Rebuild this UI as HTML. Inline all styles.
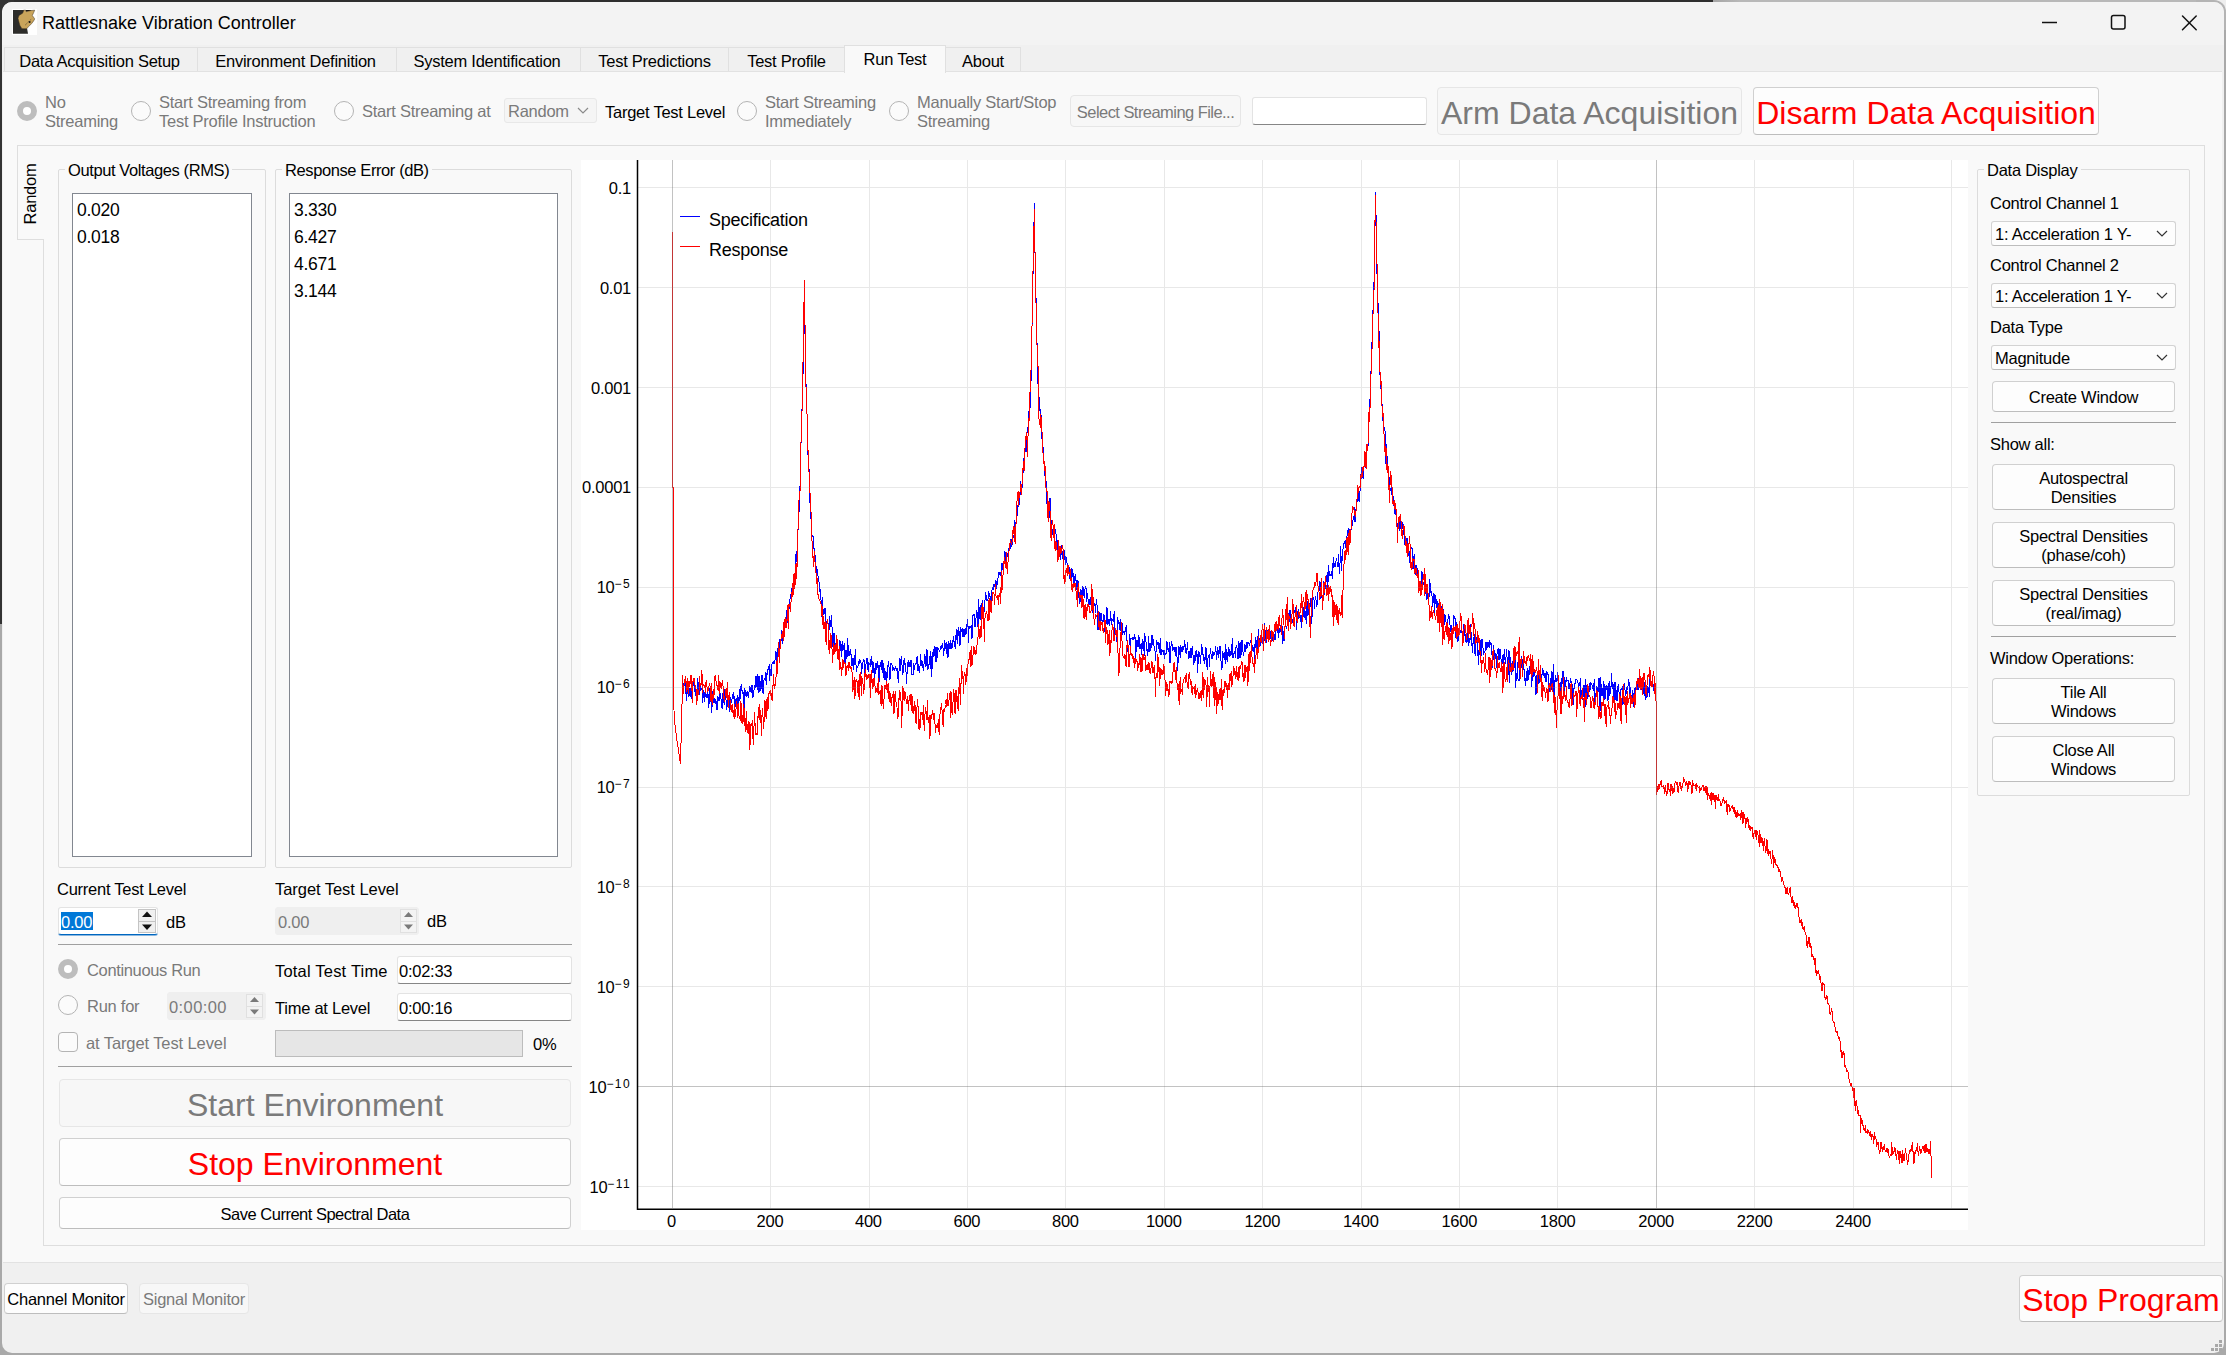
<!DOCTYPE html>
<html><head><meta charset="utf-8"><title>Rattlesnake Vibration Controller</title>
<style>
html,body{margin:0;padding:0;}
body{width:2226px;height:1355px;overflow:hidden;position:relative;background:#a9a9a9;
 font-family:"Liberation Sans",sans-serif;font-size:16.5px;letter-spacing:-0.25px;color:#000;}
.a{position:absolute;box-sizing:border-box;}
.t{position:absolute;white-space:nowrap;line-height:20px;height:20px;margin-left:-1px;}
.g{color:#7a7a7a;}
#win{left:2px;top:2px;width:2222px;height:1351px;background:#f0f0f0;border-radius:10px;overflow:hidden;}
#titlebar{left:0;top:0;width:2222px;height:43px;background:#f3f3f3;}
#title{left:43px;top:11px;font-size:18px;line-height:24px;height:24px;letter-spacing:0;}
#pane{left:3px;top:71px;width:2219px;height:1192px;background:#f9f9f9;border-top:1px solid #e2e2e2;border-bottom:1px solid #e2e2e2;}
.tab{top:47px;height:25px;background:#f0f0f0;border:1px solid #e0e0e0;border-bottom:none;text-align:center;line-height:26px;white-space:nowrap;padding-right:3px;}
.tab.sel{top:45px;height:28px;background:#f9f9f9;line-height:27px;}
.btn{background:#fdfdfd;border:1px solid #d0d0d0;border-bottom-color:#bdbdbd;border-radius:4px;text-align:center;white-space:nowrap;}
.btn.dis{background:#f7f7f7;border-color:#e6e6e6;color:#7a7a7a;}
.big{font-size:32px;line-height:48px;letter-spacing:0;}
.red{color:#ff0000;}
.radio{width:20px;height:20px;border-radius:50%;background:#fbfbfb;border:1px solid #b4b4b4;}
.radio.chk{background:#fff;border:6px solid #bdbdbd;}
.combo{background:#fdfdfd;border:1px solid #d3d3d3;border-bottom-color:#bdbdbd;border-radius:3px;line-height:24px;padding-left:3px;white-space:nowrap;}
.combo.dis{background:#f5f5f5;border-color:#e8e8e8;color:#7a7a7a;}
.edit{background:#fff;border:1px solid #e3e3e3;border-bottom:1px solid #868686;border-radius:3px;line-height:28px;padding-left:1px;white-space:nowrap;}
.grp{border:1px solid #dcdcdc;border-radius:2px;}
.grpt{background:#f9f9f9;padding:0 3px;margin-left:0;}
.list{background:#fff;border:1px solid #828790;}
.hr{height:1px;background:#a0a0a0;}
.spin{background:#fff;border:1px solid #e3e3e3;border-bottom:1px solid #0067c0;border-radius:3px;box-shadow:0 1px 0 rgba(0,103,192,0.45);}
.spin.dis{background:#efefef;border:1px solid #efefef;box-shadow:none;}
.sb{background:#f6f6f6;border:1px solid #d9d9d9;border-radius:2px;}
.two{line-height:19px;padding-top:4px;}
</style></head>
<body>
<div class="a" style="left:1700px;top:0;width:526px;height:3px;background:linear-gradient(90deg,#9c9c9c,#b8b8b8 40px)"></div>
<div class="a" style="left:0;top:0;width:1713px;height:14px;background:#2e2e2e"></div>
<div class="a" style="left:0;top:0;width:14px;height:624px;background:#333"></div>
<div class="a" style="left:2210px;top:0;width:16px;height:16px;background:#eeeeee"></div>
<div class="a" style="left:2196px;top:0;width:30px;height:30px;border-radius:0 12px 0 0;background:#b4b4b4"></div>
<div class="a" id="win"><div class="a" id="titlebar"></div></div>
<!-- title bar -->
<svg class="a" style="left:12px;top:9px" width="25" height="26" viewBox="0 0 25 26">
 <rect x="0" y="0" width="25" height="26" fill="#fff"/>
 <path d="M1 1.1H12L15 19L16 24.7H1Z" fill="#2d2c2a"/>
 <path d="M13.5 1.1H19.5L18.7 2L14.2 2.8Z" fill="#1a1512"/>
 <polygon points="11.5,1.2 13.7,1.2 14.2,2.7 18.7,1.6 22.7,1.2 21.6,3.8 20.3,6.4 22.7,9.9 21.6,12.0 19.5,14.7 16.6,17.6 14.7,19.7 9.9,19.7 7.8,16.2 6.7,12.0 6.0,9.3 7.0,6.4 10.5,4.3 11.3,2.7" fill="#c9a45b" stroke="#3a2f1c" stroke-width="0.5"/>
 <circle cx="17.6" cy="13.1" r="1" fill="#111"/>
 <path d="M13.1 16.2L19.5 9.9" stroke="#3a2f1c" stroke-width="0.6" stroke-dasharray="1 0.7"/>
</svg>
<div class="t" id="title">Rattlesnake Vibration Controller</div>
<svg class="a" style="left:2036px;top:8px" width="170" height="30" viewBox="0 0 170 30" fill="none" stroke="#111" stroke-width="1.5">
 <path d="M6 14.5H21"/>
 <rect x="75.5" y="7.5" width="13.5" height="13.5" rx="2"/>
 <path d="M146.5 8L160.2 21.7M160.2 8L146.5 21.7" stroke-linecap="round"/>
</svg>
<!-- tabs -->
<div class="a tab" style="left:4px;width:194px">Data Acquisition Setup</div>
<div class="a tab" style="left:197px;width:200px">Environment Definition</div>
<div class="a tab" style="left:396px;width:185px">System Identification</div>
<div class="a tab" style="left:580px;width:149px;padding-right:0">Test Predictions</div>
<div class="a tab" style="left:728px;width:117px;padding-right:0">Test Profile</div>
<div class="a tab" style="left:945px;width:76px;padding-right:0">About</div>
<div class="a" id="pane"></div>
<div class="a tab sel" style="left:844px;width:102px;padding-right:0">Run Test</div>
<!-- streaming row -->
<div class="a radio chk" style="left:17px;top:101px"></div>
<div class="t g" style="left:46px;top:92px">No</div><div class="t g" style="left:46px;top:111px">Streaming</div>
<div class="a radio" style="left:131px;top:101px"></div>
<div class="t g" style="left:160px;top:92px">Start Streaming from</div><div class="t g" style="left:160px;top:111px">Test Profile Instruction</div>
<div class="a radio" style="left:334px;top:101px"></div>
<div class="t g" style="left:363px;top:101px">Start Streaming at</div>
<div class="a combo dis" style="left:504px;top:98px;width:93px;height:25px">Random</div>
<svg class="a" style="left:576px;top:106px" width="14" height="10" fill="none" stroke="#8a8a8a" stroke-width="1.2"><path d="M2 2L7 7L12 2"/></svg>
<div class="t" style="left:606px;top:102px">Target Test Level</div>
<div class="a radio" style="left:737px;top:101px"></div>
<div class="t g" style="left:766px;top:92px">Start Streaming</div><div class="t g" style="left:766px;top:111px">Immediately</div>
<div class="a radio" style="left:889px;top:101px"></div>
<div class="t g" style="left:918px;top:92px">Manually Start/Stop</div><div class="t g" style="left:918px;top:111px">Streaming</div>
<div class="a btn dis" style="left:1070px;top:95px;width:171px;height:32px;line-height:32px;letter-spacing:-0.55px">Select Streaming File...</div>
<div class="a edit" style="left:1252px;top:97px;width:175px;height:28px"></div>
<div class="a btn dis big" style="left:1437px;top:87px;width:305px;height:48px;line-height:50px">Arm Data Acquisition</div>
<div class="a btn big red" style="left:1753px;top:87px;width:346px;height:48px;line-height:50px">Disarm Data Acquisition</div>
<!-- inner tab widget -->
<div class="a" style="left:43px;top:145px;width:2162px;height:1101px;border:1px solid #dedede;background:#f9f9f9"></div>
<div class="a" style="left:17px;top:145px;width:27px;height:95px;border:1px solid #dedede;border-right:none;background:#f9f9f9"></div>
<div class="t" style="left:-9px;top:184px;width:80px;text-align:center;transform:rotate(-90deg);transform-origin:50% 50%">Random</div>

<!-- left column -->
<div class="a grp" style="left:58px;top:169px;width:208px;height:699px"></div>
<div class="t grpt" style="left:65px;top:160px;letter-spacing:-0.4px">Output Voltages (RMS)</div>
<div class="a list" style="left:72px;top:193px;width:180px;height:664px"></div>
<div class="t" style="left:78px;top:200px;font-size:17.5px">0.020</div>
<div class="t" style="left:78px;top:227px;font-size:17.5px">0.018</div>
<div class="a grp" style="left:275px;top:169px;width:297px;height:699px"></div>
<div class="t grpt" style="left:282px;top:160px;letter-spacing:-0.4px">Response Error (dB)</div>
<div class="a list" style="left:289px;top:193px;width:269px;height:664px"></div>
<div class="t" style="left:295px;top:200px;font-size:17.5px">3.330</div>
<div class="t" style="left:295px;top:227px;font-size:17.5px">6.427</div>
<div class="t" style="left:295px;top:254px;font-size:17.5px">4.671</div>
<div class="t" style="left:295px;top:281px;font-size:17.5px">3.144</div>

<div class="t" style="left:58px;top:879px">Current Test Level</div>
<div class="a spin" style="left:58px;top:907px;width:100px;height:28px"></div>
<div class="a" style="left:61px;top:912px;width:32px;height:18px;background:#0078d7"></div>
<div class="t" style="left:62px;top:912px;color:#fff">0.00</div>
<div class="a" style="left:138px;top:909px;width:18px;height:24px;background:#f0f0f0;border:1px solid #c4c4c4"></div>
<div class="a" style="left:139px;top:920.5px;width:16px;height:1px;background:#c4c4c4"></div>
<svg class="a" style="left:138px;top:909px" width="18" height="24"><path d="M4 8L9 2.6L14 8Z" fill="#111"/><path d="M4 15.5L9 21L14 15.5Z" fill="#111"/></svg>
<div class="t" style="left:167px;top:912px">dB</div>
<div class="t" style="left:276px;top:879px;letter-spacing:-0.05px">Target Test Level</div>
<div class="a spin dis" style="left:275px;top:907px;width:144px;height:28px"></div>
<div class="t g" style="left:279px;top:912px">0.00</div>
<div class="a" style="left:400px;top:909px;width:17px;height:24px;background:#f3f3f3;border:1px solid #e0e0e0"></div>
<div class="a" style="left:401px;top:920.5px;width:15px;height:1px;background:#e0e0e0"></div>
<svg class="a" style="left:400px;top:909px" width="17" height="24"><path d="M4 8L8.5 3L13 8Z" fill="#7a7a7a"/><path d="M4 15.5L8.5 20.5L13 15.5Z" fill="#7a7a7a"/></svg>
<div class="t" style="left:428px;top:911px">dB</div>
<div class="a hr" style="left:58px;top:944px;width:514px"></div>

<div class="a radio chk" style="left:58px;top:959px"></div>
<div class="t g" style="left:88px;top:960px;letter-spacing:-0.35px">Continuous Run</div>
<div class="t" style="left:276px;top:961px;letter-spacing:0.2px">Total Test Time</div>
<div class="a edit" style="left:397px;top:956px;width:175px;height:28px">0:02:33</div>
<div class="a radio" style="left:58px;top:995px"></div>
<div class="t g" style="left:88px;top:996px">Run for</div>
<div class="a spin dis" style="left:167px;top:992px;width:99px;height:28px"></div>
<div class="t g" style="left:170px;top:997px;letter-spacing:0.4px">0:00:00</div>
<div class="a" style="left:246px;top:994px;width:17px;height:24px;background:#f3f3f3;border:1px solid #e0e0e0"></div>
<div class="a" style="left:247px;top:1005.5px;width:15px;height:1px;background:#e0e0e0"></div>
<svg class="a" style="left:246px;top:994px" width="17" height="24"><path d="M4 8L8.5 3L13 8Z" fill="#7a7a7a"/><path d="M4 15.5L8.5 20.5L13 15.5Z" fill="#7a7a7a"/></svg>
<div class="t" style="left:276px;top:998px">Time at Level</div>
<div class="a edit" style="left:397px;top:993px;width:175px;height:28px">0:00:16</div>
<div class="a" style="left:58px;top:1032px;width:20px;height:20px;border:1px solid #b4b4b4;border-radius:4px;background:#fbfbfb"></div>
<div class="t g" style="left:87px;top:1033px;letter-spacing:-0.1px">at Target Test Level</div>
<div class="a" style="left:275px;top:1030px;width:248px;height:27px;background:#e6e6e6;border:1px solid #bcbcbc"></div>
<div class="t" style="left:534px;top:1034px">0%</div>
<div class="a hr" style="left:58px;top:1066px;width:514px"></div>

<div class="a btn dis big" style="left:59px;top:1079px;width:512px;height:48px;line-height:50px">Start Environment</div>
<div class="a btn big red" style="left:59px;top:1138px;width:512px;height:48px;line-height:50px">Stop Environment</div>
<div class="a btn" style="left:59px;top:1197px;width:512px;height:32px;line-height:32px;letter-spacing:-0.5px">Save Current Spectral Data</div>

<svg class="a" style="left:580px;top:160px" width="1388" height="1070" viewBox="580 160 1388 1070" font-family="Liberation Sans, sans-serif">
<rect x="581" y="160" width="1387" height="1070" fill="#fff"/>
<path d="M682.2 686.0L682.8 688.9L683.4 685.7L684.0 682.7L684.6 686.0L685.2 683.4L685.8 690.5L686.4 700.8L687.0 688.4L687.6 688.3L688.2 696.4L688.8 696.0L689.4 694.8L690.0 688.4L690.6 693.7L691.2 699.1L691.8 685.7L692.4 690.9L693.0 682.3L693.6 685.9L694.2 682.5L694.8 692.0L695.4 685.8L696.0 695.3L696.6 694.4L697.2 692.0L697.8 678.1L698.4 689.8L699.0 693.0L699.6 694.4L700.2 684.7L700.8 691.2L701.4 688.5L702.0 689.8L702.6 702.9L703.2 690.3L703.8 695.2L704.4 702.4L705.0 692.5L705.6 695.5L706.2 697.3L706.8 697.2L707.4 689.7L708.0 697.7L708.6 707.6L709.2 688.3L709.8 704.1L710.4 698.7L711.0 694.1L711.6 713.3L712.2 704.0L712.8 691.3L713.4 699.1L714.0 703.1L714.6 697.7L715.2 704.2L715.8 698.8L716.4 704.4L717.0 710.4L717.6 695.6L718.2 701.3L718.8 697.2L719.4 701.1L720.0 693.2L720.6 697.0L721.2 699.3L721.8 707.3L722.4 709.2L723.0 692.6L723.6 695.8L724.2 705.4L724.8 688.7L725.4 697.7L726.0 699.9L726.6 710.0L727.2 705.7L727.8 698.6L728.4 698.3L729.0 699.0L729.6 712.1L730.2 697.8L730.8 698.3L731.4 702.5L732.0 698.9L732.6 698.2L733.2 692.5L733.8 698.8L734.4 696.0L735.0 707.3L735.6 703.1L736.2 697.8L736.8 702.8L737.4 695.4L738.0 705.2L738.6 696.9L739.2 701.2L739.8 688.8L740.4 698.9L741.0 686.0L741.6 683.6L742.2 693.6L742.8 689.8L743.4 696.1L744.0 711.6L744.6 689.3L745.2 690.2L745.8 695.2L746.4 697.1L747.0 692.0L747.6 691.6L748.2 697.8L748.8 696.1L749.4 685.8L750.0 691.1L750.6 691.6L751.2 684.8L751.8 692.7L752.4 685.3L753.0 697.5L753.6 691.2L754.2 690.0L754.8 685.5L755.4 687.9L756.0 676.4L756.6 681.2L757.2 690.3L757.8 674.5L758.4 693.2L759.0 676.0L759.6 691.8L760.2 680.6L760.8 691.2L761.4 685.8L762.0 674.7L762.6 692.3L763.2 692.8L763.8 680.5L764.4 678.3L765.0 678.0L765.6 672.1L766.2 685.3L766.8 672.7L767.4 674.7L768.0 669.3L768.6 669.3L769.2 664.4L769.8 680.5L770.4 669.0L771.0 676.2L771.6 668.0L772.2 662.7L772.8 663.9L773.4 661.5L774.0 663.8L774.6 660.5L775.2 659.5L775.8 651.4L776.4 653.1L777.0 668.8L777.6 650.6L778.2 646.6L778.8 653.7L779.4 660.2L780.0 639.2L780.6 644.6L781.2 639.6L781.8 630.3L782.4 643.8L783.0 635.6L783.6 633.7L784.2 626.1L784.8 631.5L785.4 622.3L786.0 622.2L786.6 613.1L787.2 609.2L787.8 623.3L788.4 606.9L789.0 608.8L789.6 603.1L790.2 597.4L790.8 593.7L791.4 598.1L792.0 588.2L792.6 585.7L793.2 583.4L793.8 588.8L794.4 580.2L795.0 572.8L795.6 561.4L796.2 551.4L796.8 561.6L797.4 553.4L798.0 530.4L798.6 520.5L799.2 507.5L799.8 493.0L800.4 473.1L801.0 442.9L801.6 436.5L802.2 397.0L802.8 387.9L803.4 349.4L804.0 309.9L804.3 292.0L804.6 321.1L805.2 338.8L805.8 371.3L806.4 408.6L807.0 414.4L807.6 438.4L808.2 463.0L808.8 464.9L809.4 477.8L810.0 503.1L810.6 512.3L811.2 521.3L811.8 533.9L812.4 536.0L813.0 536.4L813.6 548.6L814.2 548.1L814.8 548.3L815.4 566.1L816.0 566.2L816.6 573.9L817.2 569.1L817.8 575.3L818.4 577.5L819.0 582.2L819.6 591.9L820.2 588.6L820.8 598.9L821.4 601.7L822.0 617.4L822.6 596.6L823.2 614.5L823.8 610.2L824.4 613.5L825.0 607.9L825.6 615.6L826.2 625.5L826.8 621.0L827.4 623.7L828.0 622.9L828.6 635.0L829.2 627.7L829.8 616.3L830.4 626.9L831.0 620.9L831.6 614.8L832.2 632.6L832.8 647.4L833.4 639.2L834.0 633.5L834.6 635.8L835.2 650.5L835.8 643.7L836.4 643.5L837.0 643.4L837.6 644.6L838.2 651.0L838.8 649.6L839.4 647.6L840.0 640.4L840.6 651.0L841.2 643.7L841.8 656.6L842.4 641.3L843.0 648.6L843.6 650.0L844.2 642.7L844.8 664.2L845.4 662.8L846.0 649.6L846.6 658.8L847.2 656.2L847.8 638.3L848.4 656.1L849.0 654.3L849.6 655.7L850.2 649.1L850.8 654.3L851.4 655.3L852.0 665.8L852.6 659.8L853.2 657.6L853.8 669.7L854.4 655.2L855.0 656.6L855.6 648.6L856.2 671.7L856.8 667.5L857.4 667.6L858.0 666.1L858.6 662.1L859.2 663.2L859.8 660.3L860.4 660.8L861.0 662.7L861.6 674.0L862.2 667.0L862.8 662.6L863.4 659.8L864.0 659.7L864.6 675.9L865.2 667.8L865.8 664.7L866.4 662.4L867.0 658.1L867.6 664.5L868.2 671.8L868.8 663.1L869.4 664.2L870.0 664.4L870.6 666.6L871.2 656.5L871.8 664.6L872.4 661.1L873.0 673.0L873.6 661.8L874.2 670.9L874.8 678.2L875.4 664.9L876.0 663.3L876.6 668.4L877.2 667.1L877.8 661.3L878.4 670.8L879.0 682.7L879.6 666.0L880.2 666.5L880.8 661.6L881.4 670.3L882.0 660.6L882.6 661.6L883.2 678.0L883.8 663.0L884.4 676.7L885.0 680.2L885.6 670.7L886.2 673.0L886.8 683.8L887.4 667.8L888.0 665.4L888.6 660.9L889.2 669.2L889.8 680.0L890.4 676.1L891.0 663.2L891.6 663.6L892.2 665.7L892.8 670.9L893.4 667.4L894.0 670.2L894.6 670.8L895.2 666.7L895.8 668.2L896.4 670.0L897.0 667.9L897.6 672.2L898.2 682.5L898.8 672.7L899.4 668.6L900.0 658.2L900.6 671.1L901.2 656.5L901.8 659.7L902.4 674.5L903.0 673.3L903.6 667.0L904.2 657.6L904.8 665.4L905.4 663.5L906.0 672.2L906.6 684.4L907.2 668.8L907.8 662.5L908.4 660.0L909.0 666.5L909.6 665.7L910.2 659.8L910.8 667.4L911.4 659.6L912.0 674.8L912.6 674.3L913.2 674.3L913.8 663.2L914.4 669.8L915.0 665.0L915.6 663.3L916.2 663.5L916.8 657.7L917.4 656.7L918.0 671.2L918.6 664.0L919.2 666.6L919.8 672.5L920.4 654.5L921.0 659.9L921.6 665.5L922.2 666.7L922.8 661.1L923.4 670.7L924.0 664.1L924.6 654.9L925.2 656.1L925.8 667.4L926.4 664.4L927.0 649.2L927.6 670.3L928.2 664.2L928.8 669.4L929.4 656.5L930.0 656.6L930.6 651.3L931.2 676.8L931.8 656.1L932.4 668.8L933.0 652.5L933.6 657.2L934.2 645.7L934.8 653.0L935.4 662.3L936.0 647.1L936.6 662.3L937.2 656.3L937.8 647.2L938.4 650.0L939.0 649.9L939.6 652.0L940.2 648.7L940.8 646.6L941.4 649.3L942.0 644.7L942.6 642.7L943.2 649.7L943.8 656.3L944.4 640.1L945.0 648.8L945.6 644.4L946.2 642.1L946.8 653.9L947.4 643.9L948.0 658.0L948.6 641.5L949.2 648.7L949.8 644.0L950.4 640.4L951.0 648.9L951.6 643.1L952.2 648.2L952.8 642.9L953.4 636.3L954.0 641.7L954.6 642.3L955.2 648.6L955.8 635.5L956.4 640.1L957.0 629.5L957.6 644.2L958.2 632.3L958.8 627.4L959.4 637.3L960.0 645.5L960.6 627.5L961.2 629.6L961.8 631.1L962.4 628.2L963.0 637.3L963.6 629.1L964.2 629.1L964.8 637.2L965.4 627.8L966.0 634.9L966.6 625.2L967.2 623.0L967.8 618.6L968.4 642.9L969.0 626.1L969.6 629.2L970.2 626.4L970.8 627.1L971.4 625.6L972.0 638.9L972.6 617.6L973.2 613.8L973.8 616.3L974.4 613.7L975.0 626.5L975.6 626.4L976.2 613.7L976.8 610.5L977.4 615.6L978.0 627.3L978.6 598.9L979.2 618.6L979.8 607.2L980.4 620.4L981.0 605.1L981.6 608.8L982.2 600.5L982.8 602.6L983.4 617.9L984.0 612.5L984.6 602.9L985.2 599.0L985.8 591.9L986.4 599.8L987.0 600.9L987.6 599.5L988.2 598.4L988.8 591.2L989.4 596.4L990.0 595.5L990.6 604.4L991.2 607.7L991.8 591.7L992.4 586.9L993.0 590.0L993.6 585.7L994.2 583.8L994.8 586.8L995.4 579.7L996.0 589.2L996.6 582.6L997.2 583.8L997.8 579.5L998.4 574.9L999.0 572.3L999.6 575.1L1000.2 572.0L1000.8 575.7L1001.4 572.5L1002.0 563.1L1002.6 570.4L1003.2 560.6L1003.8 563.6L1004.4 563.8L1005.0 551.5L1005.6 562.8L1006.2 561.5L1006.8 557.7L1007.4 554.4L1008.0 552.9L1008.6 547.6L1009.2 550.1L1009.8 546.7L1010.4 548.9L1011.0 539.3L1011.6 546.5L1012.2 544.1L1012.8 540.4L1013.4 535.1L1014.0 537.9L1014.6 519.8L1015.2 529.2L1015.8 523.6L1016.4 519.9L1017.0 516.7L1017.6 506.0L1018.2 504.3L1018.8 506.7L1019.4 501.2L1020.0 495.5L1020.6 481.0L1021.2 489.9L1021.8 490.1L1022.4 484.3L1023.0 473.8L1023.6 458.2L1024.2 470.0L1024.8 457.4L1025.4 438.7L1026.0 452.0L1026.6 435.7L1027.2 432.3L1027.8 427.2L1028.4 431.7L1029.0 410.8L1029.6 406.1L1030.2 408.4L1030.8 395.2L1031.4 355.2L1032.0 327.1L1032.6 293.7L1033.2 265.3L1033.8 236.2L1034.3 202.6L1034.4 208.7L1035.0 252.7L1035.6 276.9L1036.2 306.5L1036.8 335.5L1037.4 357.4L1038.0 384.2L1038.6 394.6L1039.2 397.9L1039.8 410.5L1040.4 409.9L1041.0 414.1L1041.6 436.3L1042.2 439.7L1042.8 450.9L1043.4 447.0L1044.0 463.5L1044.6 470.6L1045.2 477.6L1045.8 475.6L1046.4 491.1L1047.0 504.0L1047.6 504.2L1048.2 501.8L1048.8 509.4L1049.4 517.9L1050.0 497.8L1050.6 515.5L1051.2 522.4L1051.8 525.5L1052.4 535.2L1053.0 533.0L1053.6 528.8L1054.2 530.7L1054.8 536.4L1055.4 529.3L1056.0 534.3L1056.6 543.4L1057.2 553.4L1057.8 539.7L1058.4 542.1L1059.0 545.6L1059.6 556.0L1060.2 547.3L1060.8 560.3L1061.4 545.1L1062.0 551.4L1062.6 553.0L1063.2 561.8L1063.8 565.5L1064.4 550.3L1065.0 555.5L1065.6 565.1L1066.2 560.3L1066.8 556.9L1067.4 575.0L1068.0 571.9L1068.6 572.8L1069.2 567.2L1069.8 578.8L1070.4 570.6L1071.0 581.3L1071.6 568.5L1072.2 569.8L1072.8 577.4L1073.4 572.7L1074.0 583.0L1074.6 580.8L1075.2 574.3L1075.8 581.3L1076.4 579.6L1077.0 589.6L1077.6 579.8L1078.2 581.9L1078.8 594.7L1079.4 603.5L1080.0 602.6L1080.6 588.8L1081.2 591.0L1081.8 601.9L1082.4 590.5L1083.0 586.4L1083.6 594.0L1084.2 597.5L1084.8 590.1L1085.4 586.0L1086.0 588.0L1086.6 602.3L1087.2 593.5L1087.8 597.8L1088.4 601.0L1089.0 604.8L1089.6 598.9L1090.2 605.3L1090.8 597.0L1091.4 600.9L1092.0 597.6L1092.6 613.0L1093.2 605.0L1093.8 601.5L1094.4 604.5L1095.0 606.0L1095.6 613.4L1096.2 599.3L1096.8 603.3L1097.4 608.0L1098.0 630.1L1098.6 618.9L1099.2 611.7L1099.8 618.5L1100.4 629.4L1101.0 613.1L1101.6 613.1L1102.2 625.2L1102.8 620.4L1103.4 622.2L1104.0 614.4L1104.6 632.4L1105.2 631.2L1105.8 622.8L1106.4 624.1L1107.0 607.2L1107.6 624.5L1108.2 618.8L1108.8 623.6L1109.4 625.9L1110.0 619.0L1110.6 611.4L1111.2 624.6L1111.8 617.7L1112.4 620.7L1113.0 619.7L1113.6 621.9L1114.2 610.8L1114.8 634.3L1115.4 627.6L1116.0 634.7L1116.6 641.9L1117.2 627.7L1117.8 617.4L1118.4 623.4L1119.0 622.1L1119.6 626.9L1120.2 631.1L1120.8 619.2L1121.4 634.2L1122.0 623.1L1122.6 634.8L1123.2 632.4L1123.8 631.7L1124.4 633.6L1125.0 631.3L1125.6 631.4L1126.2 625.5L1126.8 635.8L1127.4 650.5L1128.0 652.0L1128.6 647.5L1129.2 643.3L1129.8 634.4L1130.4 649.6L1131.0 638.5L1131.6 638.7L1132.2 637.6L1132.8 640.3L1133.4 637.3L1134.0 639.6L1134.6 633.9L1135.2 638.3L1135.8 658.1L1136.4 640.6L1137.0 639.9L1137.6 645.6L1138.2 647.1L1138.8 635.4L1139.4 641.0L1140.0 649.4L1140.6 644.8L1141.2 643.9L1141.8 655.0L1142.4 639.4L1143.0 644.3L1143.6 640.8L1144.2 655.5L1144.8 632.8L1145.4 640.7L1146.0 641.7L1146.6 650.2L1147.2 650.0L1147.8 656.2L1148.4 636.5L1149.0 651.8L1149.6 644.6L1150.2 642.6L1150.8 650.9L1151.4 641.5L1152.0 634.9L1152.6 645.3L1153.2 638.8L1153.8 644.1L1154.4 651.0L1155.0 650.8L1155.6 660.7L1156.2 647.7L1156.8 640.0L1157.4 644.7L1158.0 643.8L1158.6 642.0L1159.2 652.6L1159.8 645.6L1160.4 637.7L1161.0 654.8L1161.6 648.9L1162.2 652.3L1162.8 650.5L1163.4 654.6L1164.0 650.1L1164.6 659.3L1165.2 653.2L1165.8 653.0L1166.4 653.2L1167.0 641.5L1167.6 649.3L1168.2 648.8L1168.8 652.0L1169.4 642.5L1170.0 663.0L1170.6 651.5L1171.2 643.6L1171.8 640.7L1172.4 649.3L1173.0 650.5L1173.6 646.9L1174.2 652.0L1174.8 647.5L1175.4 655.6L1176.0 647.2L1176.6 651.4L1177.2 659.1L1177.8 671.3L1178.4 645.9L1179.0 649.2L1179.6 647.1L1180.2 658.1L1180.8 645.4L1181.4 649.5L1182.0 652.3L1182.6 646.7L1183.2 646.9L1183.8 649.9L1184.4 640.3L1185.0 644.2L1185.6 650.4L1186.2 654.1L1186.8 651.9L1187.4 642.5L1188.0 650.4L1188.6 659.2L1189.2 657.5L1189.8 652.8L1190.4 648.1L1191.0 658.2L1191.6 650.0L1192.2 646.6L1192.8 648.8L1193.4 664.7L1194.0 655.4L1194.6 662.6L1195.2 651.0L1195.8 661.0L1196.4 650.4L1197.0 653.1L1197.6 673.0L1198.2 660.0L1198.8 651.2L1199.4 653.8L1200.0 656.8L1200.6 663.6L1201.2 651.5L1201.8 644.1L1202.4 652.8L1203.0 654.5L1203.6 655.1L1204.2 664.2L1204.8 656.6L1205.4 660.3L1206.0 647.5L1206.6 660.6L1207.2 669.9L1207.8 659.8L1208.4 655.8L1209.0 654.9L1209.6 667.3L1210.2 648.1L1210.8 652.9L1211.4 657.0L1212.0 659.1L1212.6 650.8L1213.2 655.7L1213.8 651.6L1214.4 654.1L1215.0 652.4L1215.6 646.3L1216.2 652.9L1216.8 659.6L1217.4 647.2L1218.0 651.4L1218.6 657.9L1219.2 646.4L1219.8 654.1L1220.4 646.3L1221.0 661.1L1221.6 670.0L1222.2 667.7L1222.8 650.9L1223.4 657.8L1224.0 653.0L1224.6 652.7L1225.2 663.6L1225.8 643.9L1226.4 659.7L1227.0 651.3L1227.6 662.2L1228.2 652.8L1228.8 647.3L1229.4 653.3L1230.0 656.7L1230.6 651.3L1231.2 654.7L1231.8 647.8L1232.4 638.1L1233.0 657.5L1233.6 655.9L1234.2 651.6L1234.8 651.0L1235.4 658.2L1236.0 647.5L1236.6 646.0L1237.2 649.0L1237.8 659.0L1238.4 641.4L1239.0 658.5L1239.6 645.4L1240.2 642.3L1240.8 658.2L1241.4 647.8L1242.0 640.4L1242.6 645.7L1243.2 654.6L1243.8 656.3L1244.4 644.5L1245.0 649.8L1245.6 651.9L1246.2 642.4L1246.8 648.6L1247.4 645.5L1248.0 642.2L1248.6 642.2L1249.2 645.4L1249.8 644.8L1250.4 641.0L1251.0 641.5L1251.6 652.2L1252.2 645.1L1252.8 650.0L1253.4 652.1L1254.0 647.2L1254.6 659.7L1255.2 637.3L1255.8 648.0L1256.4 639.6L1257.0 655.2L1257.6 653.7L1258.2 628.8L1258.8 634.3L1259.4 644.8L1260.0 645.4L1260.6 644.6L1261.2 638.2L1261.8 641.7L1262.4 642.9L1263.0 637.1L1263.6 645.0L1264.2 623.4L1264.8 641.3L1265.4 630.1L1266.0 643.3L1266.6 634.4L1267.2 630.3L1267.8 638.2L1268.4 629.7L1269.0 629.4L1269.6 625.3L1270.2 634.2L1270.8 637.9L1271.4 641.6L1272.0 632.8L1272.6 641.4L1273.2 633.3L1273.8 632.3L1274.4 637.0L1275.0 640.3L1275.6 630.0L1276.2 630.3L1276.8 630.4L1277.4 631.7L1278.0 625.5L1278.6 638.3L1279.2 627.8L1279.8 633.4L1280.4 624.7L1281.0 632.0L1281.6 632.0L1282.2 626.2L1282.8 643.7L1283.4 630.8L1284.0 641.0L1284.6 634.4L1285.2 622.7L1285.8 624.0L1286.4 629.2L1287.0 625.9L1287.6 625.4L1288.2 622.9L1288.8 613.4L1289.4 622.4L1290.0 610.1L1290.6 625.7L1291.2 618.2L1291.8 617.8L1292.4 620.3L1293.0 623.1L1293.6 612.1L1294.2 609.7L1294.8 613.3L1295.4 607.0L1296.0 612.9L1296.6 630.3L1297.2 611.4L1297.8 622.2L1298.4 608.6L1299.0 618.6L1299.6 613.9L1300.2 615.0L1300.8 619.2L1301.4 627.7L1302.0 615.3L1302.6 614.3L1303.2 607.1L1303.8 616.8L1304.4 610.5L1305.0 617.8L1305.6 610.7L1306.2 623.7L1306.8 598.2L1307.4 607.7L1308.0 615.7L1308.6 606.4L1309.2 603.3L1309.8 605.9L1310.4 598.5L1311.0 606.9L1311.6 623.8L1312.2 613.3L1312.8 597.3L1313.4 597.9L1314.0 600.0L1314.6 609.3L1315.2 596.1L1315.8 596.1L1316.4 606.2L1317.0 605.4L1317.6 595.9L1318.2 590.7L1318.8 587.3L1319.4 591.2L1320.0 581.1L1320.6 598.9L1321.2 588.4L1321.8 594.7L1322.4 604.2L1323.0 597.9L1323.6 581.0L1324.2 593.4L1324.8 594.5L1325.4 580.2L1326.0 577.9L1326.6 581.9L1327.2 571.9L1327.8 591.5L1328.4 564.8L1329.0 571.3L1329.6 575.1L1330.2 574.2L1330.8 575.6L1331.4 575.2L1332.0 570.6L1332.6 579.3L1333.2 556.8L1333.8 568.3L1334.4 562.9L1335.0 566.9L1335.6 566.4L1336.2 558.1L1336.8 558.4L1337.4 566.9L1338.0 562.2L1338.6 554.2L1339.2 572.4L1339.8 573.2L1340.4 545.6L1341.0 555.3L1341.6 570.7L1342.2 556.3L1342.8 550.7L1343.4 546.5L1344.0 543.2L1344.6 543.8L1345.2 540.5L1345.8 547.9L1346.4 538.0L1347.0 536.0L1347.6 529.7L1348.2 534.7L1348.8 527.9L1349.4 530.4L1350.0 537.6L1350.6 530.6L1351.2 529.9L1351.8 527.0L1352.4 522.9L1353.0 519.7L1353.6 516.4L1354.2 521.8L1354.8 507.3L1355.4 521.7L1356.0 509.5L1356.6 502.6L1357.2 501.9L1357.8 498.5L1358.4 500.9L1359.0 492.4L1359.6 502.2L1360.2 485.8L1360.8 473.8L1361.4 479.2L1362.0 467.5L1362.6 475.1L1363.2 479.2L1363.8 472.0L1364.4 455.0L1365.0 454.3L1365.6 468.2L1366.2 453.0L1366.8 446.5L1367.4 445.1L1368.0 446.3L1368.6 428.1L1369.2 409.9L1369.8 402.1L1370.4 394.6L1371.0 371.1L1371.6 350.3L1372.2 338.9L1372.8 314.8L1373.4 301.9L1374.0 282.3L1374.6 265.8L1375.2 209.3L1375.6 192.0L1375.8 202.6L1376.4 237.6L1377.0 274.0L1377.6 290.7L1378.2 308.0L1378.8 322.4L1379.4 346.0L1380.0 374.8L1380.6 388.3L1381.2 389.1L1381.8 400.1L1382.4 409.7L1383.0 420.5L1383.6 420.3L1384.2 429.5L1384.8 427.3L1385.4 438.5L1386.0 463.8L1386.6 444.4L1387.2 461.4L1387.8 471.0L1388.4 473.1L1389.0 476.5L1389.6 486.3L1390.2 489.0L1390.8 490.8L1391.4 482.5L1392.0 495.0L1392.6 493.1L1393.2 497.3L1393.8 504.6L1394.4 509.9L1395.0 514.1L1395.6 506.5L1396.2 518.7L1396.8 522.8L1397.4 524.7L1398.0 528.8L1398.6 519.6L1399.2 521.6L1399.8 530.7L1400.4 517.9L1401.0 529.1L1401.6 525.9L1402.2 528.5L1402.8 521.9L1403.4 528.5L1404.0 535.2L1404.6 543.6L1405.2 545.9L1405.8 539.5L1406.4 540.4L1407.0 538.1L1407.6 547.7L1408.2 544.7L1408.8 552.4L1409.4 562.7L1410.0 550.9L1410.6 543.8L1411.2 549.3L1411.8 547.4L1412.4 550.5L1413.0 569.2L1413.6 562.7L1414.2 553.6L1414.8 569.2L1415.4 575.4L1416.0 565.4L1416.6 565.1L1417.2 568.8L1417.8 574.6L1418.4 578.6L1419.0 583.9L1419.6 585.2L1420.2 586.2L1420.8 588.6L1421.4 584.4L1422.0 571.5L1422.6 580.9L1423.2 585.2L1423.8 581.7L1424.4 592.0L1425.0 584.1L1425.6 581.9L1426.2 599.5L1426.8 594.7L1427.4 592.2L1428.0 598.5L1428.6 600.4L1429.2 595.8L1429.8 579.4L1430.4 590.9L1431.0 593.1L1431.6 590.8L1432.2 599.0L1432.8 607.4L1433.4 596.4L1434.0 593.4L1434.6 616.4L1435.2 599.2L1435.8 595.4L1436.4 605.4L1437.0 607.6L1437.6 601.0L1438.2 612.1L1438.8 604.0L1439.4 602.2L1440.0 609.9L1440.6 615.2L1441.2 606.5L1441.8 613.6L1442.4 611.3L1443.0 634.2L1443.6 609.3L1444.2 624.9L1444.8 614.9L1445.4 615.1L1446.0 622.0L1446.6 623.9L1447.2 627.3L1447.8 620.8L1448.4 615.3L1449.0 616.3L1449.6 624.0L1450.2 625.1L1450.8 631.9L1451.4 625.1L1452.0 630.5L1452.6 634.6L1453.2 625.0L1453.8 615.5L1454.4 617.9L1455.0 616.9L1455.6 638.2L1456.2 621.6L1456.8 636.6L1457.4 632.3L1458.0 641.5L1458.6 636.7L1459.2 629.0L1459.8 629.0L1460.4 631.5L1461.0 632.8L1461.6 628.9L1462.2 632.4L1462.8 645.4L1463.4 623.6L1464.0 636.2L1464.6 629.3L1465.2 636.6L1465.8 642.0L1466.4 635.8L1467.0 642.5L1467.6 627.7L1468.2 646.0L1468.8 634.5L1469.4 643.3L1470.0 640.4L1470.6 624.2L1471.2 635.5L1471.8 642.2L1472.4 652.7L1473.0 643.4L1473.6 643.6L1474.2 633.6L1474.8 653.2L1475.4 656.4L1476.0 643.3L1476.6 642.1L1477.2 634.2L1477.8 650.8L1478.4 665.0L1479.0 650.3L1479.6 654.8L1480.2 649.7L1480.8 640.1L1481.4 656.4L1482.0 639.3L1482.6 645.8L1483.2 649.5L1483.8 654.5L1484.4 651.3L1485.0 651.4L1485.6 644.3L1486.2 641.6L1486.8 650.0L1487.4 645.7L1488.0 642.5L1488.6 643.2L1489.2 648.1L1489.8 640.4L1490.4 643.8L1491.0 642.4L1491.6 653.9L1492.2 655.9L1492.8 668.4L1493.4 644.7L1494.0 649.9L1494.6 661.2L1495.2 653.4L1495.8 653.1L1496.4 668.3L1497.0 653.7L1497.6 649.2L1498.2 648.6L1498.8 659.3L1499.4 659.5L1500.0 649.4L1500.6 652.0L1501.2 662.3L1501.8 663.0L1502.4 655.1L1503.0 664.0L1503.6 664.0L1504.2 649.4L1504.8 658.5L1505.4 663.9L1506.0 657.7L1506.6 648.8L1507.2 660.2L1507.8 667.9L1508.4 674.6L1509.0 649.9L1509.6 683.1L1510.2 656.9L1510.8 671.3L1511.4 673.7L1512.0 672.2L1512.6 666.2L1513.2 658.5L1513.8 670.6L1514.4 661.9L1515.0 651.5L1515.6 688.4L1516.2 672.6L1516.8 681.4L1517.4 662.4L1518.0 679.2L1518.6 680.4L1519.2 680.4L1519.8 668.7L1520.4 661.9L1521.0 668.2L1521.6 656.4L1522.2 659.7L1522.8 670.7L1523.4 664.4L1524.0 669.5L1524.6 670.1L1525.2 685.6L1525.8 681.0L1526.4 671.3L1527.0 681.1L1527.6 667.6L1528.2 670.6L1528.8 679.9L1529.4 666.0L1530.0 672.1L1530.6 666.2L1531.2 675.3L1531.8 687.2L1532.4 670.7L1533.0 677.2L1533.6 670.5L1534.2 669.4L1534.8 669.3L1535.4 687.8L1536.0 694.8L1536.6 680.6L1537.2 672.8L1537.8 682.6L1538.4 675.3L1539.0 683.5L1539.6 679.8L1540.2 679.8L1540.8 682.4L1541.4 674.5L1542.0 675.6L1542.6 667.9L1543.2 675.7L1543.8 670.0L1544.4 677.7L1545.0 673.0L1545.6 679.5L1546.2 682.3L1546.8 670.6L1547.4 674.3L1548.0 673.6L1548.6 685.0L1549.2 692.4L1549.8 686.1L1550.4 677.7L1551.0 691.0L1551.6 671.0L1552.2 691.5L1552.8 676.3L1553.4 663.8L1554.0 700.6L1554.6 692.6L1555.2 674.6L1555.8 682.1L1556.4 679.7L1557.0 681.8L1557.6 672.4L1558.2 677.3L1558.8 685.0L1559.4 683.2L1560.0 690.8L1560.6 682.4L1561.2 699.7L1561.8 677.8L1562.4 684.1L1563.0 670.9L1563.6 674.9L1564.2 692.6L1564.8 677.0L1565.4 686.8L1566.0 682.5L1566.6 676.8L1567.2 681.0L1567.8 680.2L1568.4 680.4L1569.0 689.2L1569.6 688.5L1570.2 680.3L1570.8 678.4L1571.4 686.1L1572.0 683.5L1572.6 692.0L1573.2 704.5L1573.8 690.8L1574.4 684.3L1575.0 683.6L1575.6 679.7L1576.2 679.5L1576.8 679.1L1577.4 682.8L1578.0 682.7L1578.6 691.0L1579.2 683.1L1579.8 684.4L1580.4 678.5L1581.0 698.3L1581.6 689.7L1582.2 699.5L1582.8 692.1L1583.4 697.4L1584.0 684.7L1584.6 691.8L1585.2 706.9L1585.8 679.2L1586.4 695.5L1587.0 699.5L1587.6 689.9L1588.2 692.6L1588.8 696.6L1589.4 683.0L1590.0 690.3L1590.6 681.9L1591.2 683.2L1591.8 683.6L1592.4 686.6L1593.0 688.7L1593.6 691.1L1594.2 679.1L1594.8 703.2L1595.4 696.9L1596.0 693.6L1596.6 685.9L1597.2 687.6L1597.8 692.5L1598.4 691.4L1599.0 678.0L1599.6 694.1L1600.2 711.0L1600.8 677.1L1601.4 696.1L1602.0 691.3L1602.6 687.8L1603.2 699.2L1603.8 681.3L1604.4 689.8L1605.0 700.0L1605.6 687.4L1606.2 686.1L1606.8 689.6L1607.4 686.0L1608.0 700.8L1608.6 683.2L1609.2 695.6L1609.8 681.2L1610.4 694.1L1611.0 688.2L1611.6 673.1L1612.2 688.9L1612.8 682.4L1613.4 686.3L1614.0 701.0L1614.6 682.2L1615.2 682.6L1615.8 700.3L1616.4 690.0L1617.0 701.2L1617.6 691.7L1618.2 683.8L1618.8 688.9L1619.4 698.9L1620.0 696.7L1620.6 689.4L1621.2 689.8L1621.8 688.7L1622.4 685.9L1623.0 704.5L1623.6 689.6L1624.2 682.6L1624.8 686.6L1625.4 695.3L1626.0 694.6L1626.6 688.8L1627.2 685.6L1627.8 689.9L1628.4 679.5L1629.0 681.8L1629.6 696.0L1630.2 686.9L1630.8 692.8L1631.4 699.4L1632.0 695.0L1632.6 690.1L1633.2 706.6L1633.8 695.2L1634.4 687.8L1635.0 695.6L1635.6 693.1L1636.2 684.6L1636.8 690.4L1637.4 688.8L1638.0 677.8L1638.6 688.7L1639.2 688.0L1639.8 687.0L1640.4 679.6L1641.0 687.5L1641.6 689.4L1642.2 690.4L1642.8 682.6L1643.4 694.4L1644.0 682.1L1644.6 688.1L1645.2 699.6L1645.8 685.2L1646.4 686.2L1647.0 697.7L1647.6 687.0L1648.2 687.5L1648.8 691.0L1649.4 697.4L1650.0 675.7L1650.6 684.1L1651.2 683.0L1651.8 682.5L1652.4 683.9L1653.0 684.0L1653.6 691.4L1654.2 683.6L1654.8 690.0L1655.4 692.1L1656.0 684.6" stroke="#0000ff" stroke-width="1" fill="none" shape-rendering="crispEdges"/>
<path d="M672.5 232.0L672.5 487.0L673.5 487.0L673.5 700.0L674.5 720.0L676.5 737.7L678.5 750.0L680.4 763.5L681.5 726.0L682.7 675.0L682.7 676.4L683.3 694.4L683.9 686.0L684.5 678.7L685.1 683.4L685.7 676.5L686.3 685.1L686.9 692.3L687.5 678.2L688.1 681.5L688.7 694.3L689.3 680.8L689.9 685.4L690.5 675.5L691.1 675.7L691.7 677.7L692.3 703.2L692.9 682.0L693.5 679.6L694.1 678.4L694.7 680.9L695.3 688.8L695.9 685.5L696.5 704.5L697.1 689.4L697.7 700.7L698.3 690.7L698.9 693.2L699.5 675.7L700.1 683.9L700.7 685.1L701.3 684.4L701.9 669.8L702.5 692.7L703.1 684.6L703.7 684.3L704.3 686.0L704.9 686.7L705.5 692.9L706.1 680.3L706.7 681.8L707.3 691.4L707.9 691.7L708.5 687.8L709.1 685.8L709.7 683.3L710.3 688.7L710.9 701.3L711.5 683.3L712.1 704.7L712.7 700.7L713.3 688.6L713.9 698.5L714.5 679.9L715.1 675.4L715.7 677.3L716.3 683.9L716.9 685.9L717.5 685.4L718.1 690.8L718.7 674.6L719.3 693.5L719.9 680.8L720.5 685.9L721.1 688.5L721.7 683.6L722.3 681.7L722.9 684.4L723.5 692.8L724.1 700.2L724.7 702.2L725.3 689.9L725.9 690.2L726.5 689.0L727.1 700.0L727.7 681.9L728.3 707.5L728.9 695.2L729.5 692.5L730.1 701.3L730.7 709.9L731.3 705.0L731.9 712.2L732.5 704.4L733.1 714.7L733.7 716.4L734.3 704.0L734.9 719.0L735.5 709.4L736.1 708.8L736.7 701.3L737.3 706.2L737.9 717.6L738.5 702.6L739.1 718.4L739.7 718.5L740.3 719.4L740.9 700.6L741.5 715.2L742.1 724.4L742.7 715.0L743.3 721.8L743.9 703.7L744.5 726.0L745.1 717.9L745.7 731.6L746.3 711.1L746.9 730.0L747.5 724.2L748.1 734.4L748.7 721.0L749.3 722.5L749.9 749.6L750.5 725.0L751.1 724.5L751.7 726.3L752.3 719.7L752.9 737.4L753.5 744.8L754.1 722.8L754.7 711.9L755.3 733.4L755.9 734.9L756.5 732.7L757.1 735.3L757.7 715.9L758.3 718.1L758.9 707.3L759.5 704.3L760.1 722.5L760.7 709.7L761.3 735.6L761.9 716.6L762.5 708.1L763.1 718.5L763.7 728.7L764.3 716.7L764.9 699.7L765.5 709.2L766.1 719.0L766.7 701.8L767.3 697.0L767.9 710.7L768.5 702.9L769.1 691.3L769.7 694.1L770.3 690.1L770.9 695.7L771.5 692.8L772.1 701.2L772.7 696.3L773.3 674.4L773.9 685.2L774.5 689.1L775.1 683.4L775.7 686.2L776.3 669.1L776.9 661.4L777.5 673.6L778.1 655.0L778.7 641.9L779.3 663.0L779.9 648.4L780.5 648.6L781.1 637.8L781.7 634.7L782.3 633.1L782.9 636.8L783.5 641.4L784.1 618.7L784.7 637.3L785.3 620.5L785.9 616.9L786.5 627.6L787.1 619.4L787.7 604.6L788.3 629.2L788.9 603.8L789.5 607.1L790.1 603.2L790.7 611.7L791.3 592.2L791.9 601.1L792.5 582.8L793.1 594.7L793.7 575.7L794.3 572.7L794.9 588.9L795.5 571.3L796.1 563.3L796.7 578.7L797.3 556.2L797.9 529.3L798.5 526.2L799.1 495.7L799.7 499.2L800.3 482.7L800.9 446.4L801.5 423.8L802.1 408.8L802.7 387.3L803.3 339.2L803.9 310.6L804.3 279.6L804.5 293.0L805.1 330.3L805.7 371.2L806.3 401.7L806.9 407.9L807.5 439.5L808.1 452.2L808.7 466.3L809.3 476.9L809.9 488.0L810.5 510.5L811.1 512.6L811.7 530.7L812.3 550.2L812.9 556.4L813.5 567.1L814.1 554.3L814.7 550.7L815.3 571.7L815.9 571.1L816.5 583.6L817.1 578.2L817.7 593.3L818.3 595.5L818.9 598.7L819.5 599.6L820.1 601.3L820.7 602.5L821.3 605.2L821.9 615.8L822.5 605.7L823.1 628.9L823.7 616.3L824.3 628.8L824.9 622.2L825.5 622.0L826.1 645.3L826.7 626.8L827.3 619.3L827.9 623.5L828.5 628.0L829.1 653.7L829.7 640.1L830.3 648.1L830.9 632.9L831.5 643.7L832.1 649.4L832.7 663.3L833.3 643.1L833.9 654.3L834.5 653.7L835.1 644.0L835.7 651.4L836.3 650.6L836.9 635.1L837.5 656.5L838.1 659.6L838.7 652.9L839.3 645.9L839.9 669.9L840.5 662.0L841.1 670.1L841.7 675.9L842.3 658.9L842.9 670.1L843.5 661.3L844.1 662.5L844.7 662.8L845.3 664.0L845.9 675.9L846.5 668.5L847.1 665.9L847.7 665.1L848.3 670.9L848.9 661.9L849.5 664.5L850.1 668.6L850.7 665.8L851.3 669.7L851.9 666.9L852.5 691.7L853.1 689.6L853.7 682.4L854.3 677.2L854.9 699.1L855.5 684.1L856.1 678.8L856.7 681.5L857.3 681.6L857.9 692.8L858.5 680.4L859.1 700.3L859.7 674.4L860.3 685.9L860.9 671.8L861.5 696.0L862.1 678.2L862.7 679.2L863.3 688.8L863.9 693.6L864.5 673.1L865.1 676.8L865.7 668.6L866.3 679.3L866.9 678.8L867.5 677.3L868.1 674.7L868.7 676.7L869.3 674.4L869.9 685.4L870.5 697.6L871.1 670.0L871.7 681.5L872.3 680.3L872.9 688.8L873.5 678.4L874.1 684.1L874.7 678.2L875.3 692.5L875.9 689.3L876.5 687.8L877.1 693.1L877.7 688.6L878.3 678.4L878.9 694.4L879.5 693.8L880.1 690.5L880.7 701.5L881.3 705.7L881.9 685.9L882.5 686.3L883.1 707.0L883.7 709.1L884.3 690.2L884.9 684.9L885.5 687.8L886.1 689.0L886.7 681.0L887.3 692.6L887.9 684.0L888.5 683.9L889.1 701.6L889.7 690.6L890.3 694.9L890.9 702.2L891.5 705.7L892.1 695.8L892.7 698.1L893.3 691.3L893.9 714.1L894.5 706.6L895.1 691.2L895.7 697.9L896.3 705.4L896.9 704.6L897.5 718.6L898.1 716.5L898.7 698.3L899.3 699.9L899.9 690.2L900.5 700.8L901.1 701.3L901.7 727.5L902.3 706.0L902.9 686.4L903.5 694.2L904.1 700.6L904.7 691.1L905.3 693.3L905.9 697.6L906.5 704.4L907.1 701.8L907.7 696.5L908.3 710.6L908.9 700.9L909.5 700.9L910.1 694.1L910.7 698.0L911.3 710.6L911.9 694.3L912.5 705.0L913.1 713.9L913.7 706.0L914.3 711.1L914.9 701.0L915.5 721.5L916.1 722.8L916.7 715.7L917.3 699.0L917.9 702.3L918.5 719.6L919.1 730.3L919.7 719.2L920.3 728.2L920.9 711.9L921.5 713.8L922.1 715.3L922.7 720.0L923.3 704.9L923.9 724.1L924.5 730.9L925.1 710.6L925.7 707.2L926.3 719.8L926.9 713.6L927.5 700.1L928.1 723.2L928.7 720.0L929.3 715.3L929.9 739.3L930.5 723.2L931.1 714.2L931.7 719.3L932.3 710.3L932.9 711.1L933.5 720.0L934.1 713.4L934.7 713.5L935.3 733.1L935.9 728.1L936.5 727.8L937.1 724.7L937.7 723.4L938.3 732.4L938.9 718.6L939.5 735.2L940.1 710.2L940.7 712.6L941.3 702.9L941.9 708.9L942.5 716.4L943.1 726.9L943.7 708.6L944.3 711.7L944.9 708.4L945.5 704.5L946.1 699.4L946.7 707.3L947.3 693.5L947.9 705.3L948.5 705.1L949.1 699.5L949.7 695.3L950.3 690.8L950.9 717.8L951.5 692.1L952.1 714.7L952.7 707.4L953.3 697.4L953.9 689.1L954.5 705.8L955.1 713.9L955.7 689.8L956.3 691.2L956.9 702.3L957.5 695.9L958.1 711.1L958.7 687.2L959.3 693.9L959.9 677.6L960.5 704.8L961.1 680.4L961.7 665.0L962.3 676.4L962.9 675.5L963.5 693.9L964.1 673.2L964.7 672.4L965.3 676.1L965.9 684.7L966.5 668.2L967.1 675.5L967.7 669.2L968.3 659.6L968.9 660.7L969.5 659.1L970.1 650.5L970.7 667.3L971.3 645.7L971.9 664.7L972.5 664.1L973.1 653.7L973.7 646.3L974.3 648.3L974.9 653.2L975.5 654.8L976.1 649.0L976.7 653.6L977.3 637.6L977.9 640.6L978.5 623.9L979.1 639.0L979.7 633.0L980.3 626.1L980.9 637.9L981.5 633.2L982.1 602.6L982.7 619.1L983.3 607.3L983.9 625.9L984.5 641.7L985.1 614.3L985.7 615.5L986.3 610.6L986.9 613.9L987.5 615.8L988.1 621.4L988.7 600.4L989.3 620.3L989.9 598.3L990.5 605.0L991.1 613.2L991.7 609.3L992.3 593.4L992.9 592.1L993.5 592.1L994.1 594.1L994.7 605.1L995.3 584.3L995.9 595.5L996.5 597.3L997.1 596.6L997.7 595.0L998.3 604.5L998.9 594.8L999.5 596.6L1000.1 592.8L1000.7 603.6L1001.3 570.7L1001.9 592.7L1002.5 578.0L1003.1 574.8L1003.7 566.8L1004.3 556.6L1004.9 564.4L1005.5 560.9L1006.1 568.7L1006.7 552.2L1007.3 573.7L1007.9 563.5L1008.5 556.4L1009.1 549.9L1009.7 546.1L1010.3 540.6L1010.9 542.2L1011.5 544.6L1012.1 541.8L1012.7 530.1L1013.3 534.2L1013.9 526.0L1014.5 529.9L1015.1 544.1L1015.7 531.2L1016.3 517.8L1016.9 502.3L1017.5 497.7L1018.1 490.7L1018.7 505.5L1019.3 491.8L1019.9 493.7L1020.5 485.2L1021.1 486.2L1021.7 495.4L1022.3 473.5L1022.9 470.1L1023.5 461.5L1024.1 470.8L1024.7 451.5L1025.3 444.6L1025.9 437.2L1026.5 431.7L1027.1 441.6L1027.7 456.9L1028.3 418.4L1028.9 424.2L1029.5 409.6L1030.1 388.9L1030.7 384.5L1031.3 357.7L1031.9 327.0L1032.5 323.5L1033.1 263.3L1033.7 244.9L1034.3 209.2L1034.3 209.4L1034.9 244.4L1035.5 285.4L1036.1 306.0L1036.7 331.2L1037.3 357.2L1037.9 357.6L1038.5 402.7L1039.1 422.2L1039.7 420.3L1040.3 428.2L1040.9 414.2L1041.5 429.3L1042.1 432.0L1042.7 441.4L1043.3 463.6L1043.9 458.5L1044.5 471.0L1045.1 465.9L1045.7 484.5L1046.3 491.6L1046.9 490.4L1047.5 493.8L1048.1 521.6L1048.7 500.9L1049.3 503.0L1049.9 506.3L1050.5 526.1L1051.1 540.5L1051.7 528.0L1052.3 519.6L1052.9 522.3L1053.5 537.9L1054.1 524.1L1054.7 546.2L1055.3 550.8L1055.9 540.9L1056.5 547.4L1057.1 550.9L1057.7 561.5L1058.3 540.4L1058.9 559.6L1059.5 548.0L1060.1 545.6L1060.7 553.1L1061.3 552.9L1061.9 548.5L1062.5 544.6L1063.1 550.2L1063.7 573.3L1064.3 584.1L1064.9 575.5L1065.5 582.0L1066.1 567.7L1066.7 571.0L1067.3 575.6L1067.9 565.7L1068.5 566.1L1069.1 575.1L1069.7 574.1L1070.3 569.5L1070.9 581.4L1071.5 578.5L1072.1 591.7L1072.7 584.6L1073.3 582.7L1073.9 586.9L1074.5 585.7L1075.1 582.8L1075.7 585.4L1076.3 596.9L1076.9 598.8L1077.5 607.1L1078.1 583.1L1078.7 591.3L1079.3 592.4L1079.9 598.2L1080.5 595.2L1081.1 595.5L1081.7 608.0L1082.3 605.0L1082.9 595.1L1083.5 616.8L1084.1 617.5L1084.7 604.7L1085.3 616.6L1085.9 604.0L1086.5 619.9L1087.1 609.1L1087.7 604.1L1088.3 606.8L1088.9 604.2L1089.5 611.6L1090.1 613.1L1090.7 612.8L1091.3 608.6L1091.9 584.1L1092.5 609.8L1093.1 597.3L1093.7 613.3L1094.3 624.8L1094.9 619.6L1095.5 614.2L1096.1 615.7L1096.7 616.5L1097.3 613.8L1097.9 613.6L1098.5 611.3L1099.1 629.9L1099.7 621.4L1100.3 631.3L1100.9 621.4L1101.5 623.8L1102.1 622.1L1102.7 628.3L1103.3 633.4L1103.9 629.2L1104.5 621.6L1105.1 620.2L1105.7 642.5L1106.3 627.4L1106.9 626.9L1107.5 643.9L1108.1 643.3L1108.7 639.1L1109.3 630.3L1109.9 656.4L1110.5 641.0L1111.1 641.9L1111.7 635.0L1112.3 625.0L1112.9 624.5L1113.5 638.4L1114.1 641.3L1114.7 637.5L1115.3 630.8L1115.9 628.3L1116.5 637.0L1117.1 630.0L1117.7 649.6L1118.3 656.1L1118.9 675.8L1119.5 660.8L1120.1 646.2L1120.7 642.7L1121.3 621.6L1121.9 640.2L1122.5 645.3L1123.1 657.4L1123.7 656.7L1124.3 657.5L1124.9 654.3L1125.5 658.6L1126.1 667.2L1126.7 645.5L1127.3 648.0L1127.9 640.4L1128.5 665.7L1129.1 666.6L1129.7 662.8L1130.3 646.0L1130.9 655.3L1131.5 653.2L1132.1 656.3L1132.7 655.2L1133.3 662.5L1133.9 655.9L1134.5 667.5L1135.1 663.7L1135.7 659.4L1136.3 660.9L1136.9 659.1L1137.5 670.8L1138.1 662.9L1138.7 668.1L1139.3 662.7L1139.9 653.6L1140.5 672.1L1141.1 657.6L1141.7 671.0L1142.3 670.4L1142.9 653.8L1143.5 657.1L1144.1 660.3L1144.7 658.4L1145.3 655.5L1145.9 671.0L1146.5 664.6L1147.1 670.2L1147.7 663.9L1148.3 669.8L1148.9 662.0L1149.5 667.0L1150.1 673.6L1150.7 669.8L1151.3 665.9L1151.9 660.6L1152.5 669.6L1153.1 673.0L1153.7 668.7L1154.3 664.7L1154.9 675.4L1155.5 696.6L1156.1 673.0L1156.7 677.3L1157.3 677.7L1157.9 653.8L1158.5 671.5L1159.1 666.7L1159.7 685.6L1160.3 672.8L1160.9 668.2L1161.5 671.8L1162.1 675.3L1162.7 670.3L1163.3 673.9L1163.9 664.2L1164.5 671.9L1165.1 681.9L1165.7 696.1L1166.3 686.6L1166.9 682.0L1167.5 690.5L1168.1 690.1L1168.7 697.0L1169.3 692.7L1169.9 680.6L1170.5 682.6L1171.1 681.7L1171.7 682.9L1172.3 682.2L1172.9 674.0L1173.5 662.8L1174.1 672.0L1174.7 662.3L1175.3 677.7L1175.9 679.4L1176.5 667.4L1177.1 685.3L1177.7 690.1L1178.3 684.3L1178.9 699.9L1179.5 704.5L1180.1 677.2L1180.7 694.1L1181.3 689.9L1181.9 689.8L1182.5 695.1L1183.1 680.7L1183.7 680.3L1184.3 677.9L1184.9 678.0L1185.5 683.0L1186.1 673.2L1186.7 675.2L1187.3 688.4L1187.9 684.8L1188.5 689.4L1189.1 671.7L1189.7 678.0L1190.3 680.0L1190.9 685.1L1191.5 681.3L1192.1 694.6L1192.7 687.1L1193.3 687.4L1193.9 687.2L1194.5 694.1L1195.1 684.1L1195.7 697.9L1196.3 693.2L1196.9 690.0L1197.5 688.3L1198.1 692.7L1198.7 698.1L1199.3 698.5L1199.9 693.2L1200.5 697.5L1201.1 690.4L1201.7 700.7L1202.3 689.4L1202.9 671.9L1203.5 698.0L1204.1 689.2L1204.7 678.8L1205.3 684.9L1205.9 680.0L1206.5 706.9L1207.1 695.3L1207.7 677.4L1208.3 692.2L1208.9 685.3L1209.5 707.0L1210.1 682.5L1210.7 670.9L1211.3 686.6L1211.9 685.1L1212.5 685.1L1213.1 671.9L1213.7 690.1L1214.3 705.5L1214.9 677.0L1215.5 700.3L1216.1 687.1L1216.7 714.1L1217.3 699.1L1217.9 692.1L1218.5 703.8L1219.1 699.5L1219.7 689.2L1220.3 699.6L1220.9 689.6L1221.5 678.7L1222.1 710.4L1222.7 691.9L1223.3 688.9L1223.9 696.2L1224.5 681.8L1225.1 681.3L1225.7 685.7L1226.3 684.7L1226.9 688.0L1227.5 697.8L1228.1 683.3L1228.7 689.2L1229.3 689.6L1229.9 673.8L1230.5 680.9L1231.1 671.5L1231.7 687.3L1232.3 682.9L1232.9 678.0L1233.5 666.0L1234.1 674.7L1234.7 667.9L1235.3 679.2L1235.9 672.3L1236.5 665.8L1237.1 679.4L1237.7 678.7L1238.3 666.7L1238.9 680.9L1239.5 667.9L1240.1 666.2L1240.7 668.6L1241.3 661.2L1241.9 662.1L1242.5 663.6L1243.1 679.6L1243.7 681.6L1244.3 664.8L1244.9 680.8L1245.5 665.5L1246.1 667.5L1246.7 671.8L1247.3 666.0L1247.9 686.0L1248.5 666.8L1249.1 651.9L1249.7 671.1L1250.3 656.2L1250.9 655.2L1251.5 633.2L1252.1 661.3L1252.7 662.9L1253.3 663.8L1253.9 665.8L1254.5 673.0L1255.1 656.6L1255.7 663.7L1256.3 647.2L1256.9 647.1L1257.5 658.5L1258.1 652.4L1258.7 636.4L1259.3 646.6L1259.9 641.5L1260.5 635.1L1261.1 643.3L1261.7 635.9L1262.3 624.9L1262.9 625.7L1263.5 650.9L1264.1 625.3L1264.7 636.4L1265.3 641.3L1265.9 642.6L1266.5 626.8L1267.1 631.7L1267.7 635.2L1268.3 642.4L1268.9 630.4L1269.5 624.9L1270.1 642.1L1270.7 645.5L1271.3 639.5L1271.9 630.1L1272.5 637.3L1273.1 634.8L1273.7 641.7L1274.3 623.6L1274.9 631.4L1275.5 629.2L1276.1 621.0L1276.7 629.5L1277.3 628.3L1277.9 624.4L1278.5 630.3L1279.1 615.5L1279.7 623.6L1280.3 628.1L1280.9 627.2L1281.5 634.8L1282.1 614.9L1282.7 609.4L1283.3 620.0L1283.9 622.2L1284.5 638.5L1285.1 625.1L1285.7 609.2L1286.3 620.3L1286.9 605.1L1287.5 597.0L1288.1 631.2L1288.7 614.2L1289.3 617.5L1289.9 616.4L1290.5 629.1L1291.1 616.0L1291.7 624.1L1292.3 604.3L1292.9 599.3L1293.5 622.6L1294.1 626.7L1294.7 619.1L1295.3 615.7L1295.9 613.4L1296.5 604.7L1297.1 623.1L1297.7 616.1L1298.3 613.6L1298.9 611.1L1299.5 616.5L1300.1 611.0L1300.7 612.0L1301.3 594.2L1301.9 605.0L1302.5 622.0L1303.1 597.6L1303.7 597.6L1304.3 606.4L1304.9 609.5L1305.5 608.2L1306.1 589.9L1306.7 605.6L1307.3 594.1L1307.9 596.7L1308.5 609.0L1309.1 604.5L1309.7 614.7L1310.3 637.8L1310.9 616.8L1311.5 613.0L1312.1 595.5L1312.7 593.3L1313.3 587.4L1313.9 588.8L1314.5 582.9L1315.1 583.8L1315.7 585.8L1316.3 578.5L1316.9 573.5L1317.5 573.4L1318.1 587.7L1318.7 586.8L1319.3 597.3L1319.9 599.6L1320.5 587.3L1321.1 595.7L1321.7 578.5L1322.3 610.2L1322.9 604.0L1323.5 590.7L1324.1 581.8L1324.7 592.8L1325.3 575.9L1325.9 582.4L1326.5 595.9L1327.1 592.0L1327.7 587.9L1328.3 600.7L1328.9 585.1L1329.5 594.4L1330.1 588.9L1330.7 585.9L1331.3 597.2L1331.9 589.3L1332.5 617.3L1333.1 599.9L1333.7 625.6L1334.3 602.3L1334.9 617.1L1335.5 605.3L1336.1 605.1L1336.7 617.2L1337.3 622.6L1337.9 606.2L1338.5 624.7L1339.1 607.9L1339.7 612.7L1340.3 614.6L1340.9 616.2L1341.5 595.5L1342.1 618.1L1342.7 600.5L1343.3 580.6L1343.9 565.9L1344.5 554.3L1345.1 550.3L1345.7 560.1L1346.3 549.9L1346.9 538.6L1347.5 538.0L1348.1 554.5L1348.7 536.5L1349.3 530.5L1349.9 544.6L1350.5 535.3L1351.1 528.0L1351.7 518.9L1352.3 507.5L1352.9 506.1L1353.5 509.3L1354.1 510.2L1354.7 513.9L1355.3 515.4L1355.9 511.2L1356.5 509.3L1357.1 497.2L1357.7 484.9L1358.3 493.1L1358.9 487.5L1359.5 486.7L1360.1 486.9L1360.7 476.8L1361.3 473.4L1361.9 476.9L1362.5 475.6L1363.1 466.2L1363.7 471.4L1364.3 462.0L1364.9 451.3L1365.5 454.4L1366.1 469.3L1366.7 443.9L1367.3 450.5L1367.9 444.9L1368.5 437.9L1369.1 407.0L1369.7 421.7L1370.3 396.2L1370.9 377.3L1371.5 358.3L1372.1 347.5L1372.7 324.8L1373.3 304.3L1373.9 300.0L1374.5 250.9L1375.1 214.6L1375.6 194.7L1375.7 200.4L1376.3 242.0L1376.9 254.7L1377.5 300.3L1378.1 315.7L1378.7 347.9L1379.3 341.2L1379.9 369.5L1380.5 384.8L1381.1 381.3L1381.7 393.5L1382.3 417.1L1382.9 412.2L1383.5 416.6L1384.1 437.1L1384.7 447.5L1385.3 455.9L1385.9 446.3L1386.5 456.0L1387.1 472.6L1387.7 464.5L1388.3 468.3L1388.9 487.3L1389.5 502.5L1390.1 482.0L1390.7 470.7L1391.3 479.1L1391.9 484.9L1392.5 494.7L1393.1 505.3L1393.7 502.5L1394.3 500.4L1394.9 508.7L1395.5 502.9L1396.1 511.2L1396.7 509.5L1397.3 542.7L1397.9 531.4L1398.5 517.8L1399.1 516.6L1399.7 521.6L1400.3 513.8L1400.9 521.0L1401.5 522.9L1402.1 538.7L1402.7 530.7L1403.3 528.8L1403.9 525.4L1404.5 527.2L1405.1 537.1L1405.7 538.7L1406.3 553.4L1406.9 540.8L1407.5 556.5L1408.1 552.0L1408.7 550.6L1409.3 535.9L1409.9 540.5L1410.5 558.4L1411.1 569.5L1411.7 561.7L1412.3 568.3L1412.9 559.3L1413.5 560.0L1414.1 558.8L1414.7 574.4L1415.3 571.9L1415.9 568.2L1416.5 568.4L1417.1 577.6L1417.7 578.0L1418.3 569.7L1418.9 592.9L1419.5 582.6L1420.1 580.6L1420.7 595.6L1421.3 594.2L1421.9 584.4L1422.5 590.2L1423.1 577.5L1423.7 580.0L1424.3 568.1L1424.9 595.9L1425.5 574.2L1426.1 594.0L1426.7 584.6L1427.3 584.3L1427.9 592.1L1428.5 598.8L1429.1 605.7L1429.7 620.6L1430.3 611.2L1430.9 617.6L1431.5 606.1L1432.1 618.6L1432.7 615.1L1433.3 610.0L1433.9 612.5L1434.5 613.4L1435.1 616.3L1435.7 619.5L1436.3 612.5L1436.9 610.3L1437.5 623.1L1438.1 604.8L1438.7 611.5L1439.3 632.2L1439.9 599.3L1440.5 611.8L1441.1 624.6L1441.7 608.1L1442.3 645.0L1442.9 604.3L1443.5 634.6L1444.1 640.0L1444.7 636.2L1445.3 626.0L1445.9 631.5L1446.5 622.3L1447.1 637.2L1447.7 623.4L1448.3 629.9L1448.9 643.5L1449.5 628.3L1450.1 633.9L1450.7 639.7L1451.3 629.7L1451.9 648.7L1452.5 642.3L1453.1 626.0L1453.7 634.2L1454.3 628.1L1454.9 627.3L1455.5 631.9L1456.1 625.5L1456.7 638.7L1457.3 624.5L1457.9 637.4L1458.5 628.0L1459.1 635.2L1459.7 622.1L1460.3 620.0L1460.9 613.2L1461.5 626.4L1462.1 632.2L1462.7 645.8L1463.3 640.3L1463.9 630.2L1464.5 624.2L1465.1 628.8L1465.7 625.0L1466.3 639.5L1466.9 636.6L1467.5 620.5L1468.1 619.7L1468.7 637.8L1469.3 630.1L1469.9 624.8L1470.5 638.0L1471.1 624.6L1471.7 624.4L1472.3 623.7L1472.9 613.3L1473.5 636.3L1474.1 623.2L1474.7 628.7L1475.3 629.3L1475.9 643.5L1476.5 639.8L1477.1 642.1L1477.7 630.7L1478.3 642.9L1478.9 634.8L1479.5 648.8L1480.1 652.6L1480.7 651.1L1481.3 672.8L1481.9 662.1L1482.5 663.2L1483.1 659.6L1483.7 656.7L1484.3 668.4L1484.9 672.3L1485.5 652.7L1486.1 671.8L1486.7 669.6L1487.3 675.4L1487.9 672.5L1488.5 657.9L1489.1 656.6L1489.7 682.8L1490.3 671.5L1490.9 657.6L1491.5 670.0L1492.1 665.5L1492.7 654.0L1493.3 648.9L1493.9 653.1L1494.5 668.2L1495.1 668.5L1495.7 668.1L1496.3 673.2L1496.9 677.7L1497.5 656.4L1498.1 668.0L1498.7 665.0L1499.3 661.9L1499.9 666.9L1500.5 671.0L1501.1 671.0L1501.7 662.2L1502.3 668.8L1502.9 693.0L1503.5 668.7L1504.1 662.0L1504.7 675.8L1505.3 681.2L1505.9 681.6L1506.5 667.3L1507.1 682.3L1507.7 666.7L1508.3 661.0L1508.9 662.4L1509.5 664.8L1510.1 671.6L1510.7 670.8L1511.3 663.5L1511.9 671.6L1512.5 663.7L1513.1 670.4L1513.7 650.4L1514.3 646.0L1514.9 663.3L1515.5 647.0L1516.1 653.3L1516.7 654.8L1517.3 651.7L1517.9 651.2L1518.5 667.7L1519.1 636.7L1519.7 661.2L1520.3 678.5L1520.9 659.9L1521.5 658.0L1522.1 664.9L1522.7 676.9L1523.3 650.9L1523.9 658.5L1524.5 656.6L1525.1 663.6L1525.7 660.9L1526.3 666.3L1526.9 657.5L1527.5 660.8L1528.1 655.7L1528.7 655.5L1529.3 659.8L1529.9 660.8L1530.5 653.6L1531.1 677.4L1531.7 664.5L1532.3 654.7L1532.9 674.8L1533.5 661.3L1534.1 671.7L1534.7 668.6L1535.3 671.9L1535.9 672.3L1536.5 667.0L1537.1 671.8L1537.7 692.9L1538.3 658.7L1538.9 673.6L1539.5 679.0L1540.1 668.4L1540.7 665.4L1541.3 696.8L1541.9 677.6L1542.5 701.0L1543.1 689.5L1543.7 684.8L1544.3 688.5L1544.9 691.0L1545.5 697.5L1546.1 691.9L1546.7 689.2L1547.3 689.6L1547.9 701.8L1548.5 699.0L1549.1 683.3L1549.7 684.4L1550.3 692.2L1550.9 685.6L1551.5 687.3L1552.1 683.2L1552.7 688.3L1553.3 695.3L1553.9 702.8L1554.5 695.0L1555.1 715.4L1555.7 697.3L1556.3 728.4L1556.9 711.2L1557.5 705.3L1558.1 694.8L1558.7 674.7L1559.3 691.7L1559.9 695.7L1560.5 714.3L1561.1 687.1L1561.7 713.9L1562.3 695.7L1562.9 703.7L1563.5 676.9L1564.1 694.0L1564.7 691.6L1565.3 700.9L1565.9 696.6L1566.5 686.5L1567.1 702.9L1567.7 702.5L1568.3 702.2L1568.9 706.5L1569.5 708.1L1570.1 697.3L1570.7 685.0L1571.3 682.8L1571.9 705.6L1572.5 703.0L1573.1 697.9L1573.7 693.0L1574.3 696.0L1574.9 696.4L1575.5 693.8L1576.1 690.8L1576.7 717.1L1577.3 702.1L1577.9 694.0L1578.5 687.4L1579.1 690.6L1579.7 703.1L1580.3 705.5L1580.9 696.9L1581.5 698.2L1582.1 694.9L1582.7 688.0L1583.3 707.7L1583.9 701.2L1584.5 722.0L1585.1 693.5L1585.7 695.4L1586.3 704.6L1586.9 694.5L1587.5 684.4L1588.1 685.8L1588.7 693.3L1589.3 697.3L1589.9 694.7L1590.5 705.8L1591.1 707.8L1591.7 702.4L1592.3 699.3L1592.9 696.6L1593.5 703.9L1594.1 708.9L1594.7 701.8L1595.3 705.3L1595.9 698.7L1596.5 689.8L1597.1 691.7L1597.7 706.7L1598.3 706.4L1598.9 718.9L1599.5 706.2L1600.1 713.3L1600.7 718.8L1601.3 716.9L1601.9 701.9L1602.5 703.6L1603.1 706.3L1603.7 697.8L1604.3 709.0L1604.9 716.3L1605.5 703.9L1606.1 726.5L1606.7 707.3L1607.3 706.4L1607.9 705.4L1608.5 701.4L1609.1 710.0L1609.7 707.3L1610.3 723.7L1610.9 715.8L1611.5 714.7L1612.1 706.8L1612.7 695.7L1613.3 703.3L1613.9 697.2L1614.5 711.6L1615.1 703.5L1615.7 719.3L1616.3 711.8L1616.9 711.8L1617.5 705.1L1618.1 703.2L1618.7 706.4L1619.3 708.9L1619.9 694.0L1620.5 702.4L1621.1 724.1L1621.7 700.5L1622.3 696.2L1622.9 691.4L1623.5 684.0L1624.1 704.9L1624.7 696.5L1625.3 698.4L1625.9 713.8L1626.5 722.7L1627.1 691.4L1627.7 705.4L1628.3 701.6L1628.9 698.8L1629.5 698.7L1630.1 693.1L1630.7 707.9L1631.3 699.9L1631.9 696.2L1632.5 704.1L1633.1 701.3L1633.7 696.5L1634.3 694.1L1634.9 707.5L1635.5 696.6L1636.1 689.3L1636.7 681.5L1637.3 683.7L1637.9 677.7L1638.5 685.4L1639.1 687.6L1639.7 669.5L1640.3 682.8L1640.9 689.7L1641.5 686.4L1642.1 677.0L1642.7 695.2L1643.3 679.3L1643.9 673.6L1644.5 673.3L1645.1 681.0L1645.7 691.6L1646.3 695.6L1646.9 687.3L1647.5 674.7L1648.1 676.7L1648.7 674.3L1649.3 679.4L1649.9 667.4L1650.5 680.4L1651.1 687.0L1651.7 681.1L1652.3 686.9L1652.9 676.0L1653.5 671.0L1654.1 676.4L1654.7 693.2L1655.3 695.3L1655.9 682.7L1656.6 794.8L1657.2 785.7L1657.8 791.5L1658.4 787.7L1659.0 783.6L1659.6 788.9L1660.2 783.0L1660.8 782.2L1661.4 780.4L1662.0 786.8L1662.6 786.5L1663.2 786.7L1663.8 785.8L1664.4 794.2L1665.0 786.9L1665.6 785.6L1666.2 794.1L1666.8 796.0L1667.4 791.6L1668.0 783.4L1668.6 786.7L1669.2 791.7L1669.8 789.3L1670.4 796.2L1671.0 784.1L1671.6 791.1L1672.2 786.0L1672.8 793.9L1673.4 787.9L1674.0 792.5L1674.6 785.3L1675.2 781.7L1675.8 782.2L1676.4 783.8L1677.0 782.2L1677.6 791.1L1678.2 792.6L1678.8 787.7L1679.4 781.9L1680.0 784.5L1680.6 782.3L1681.2 791.3L1681.8 786.6L1682.4 787.0L1683.0 783.1L1683.6 777.0L1684.2 780.9L1684.8 779.9L1685.4 785.7L1686.0 785.1L1686.6 781.9L1687.2 783.1L1687.8 792.0L1688.4 782.0L1689.0 781.5L1689.6 783.9L1690.2 782.4L1690.8 783.4L1691.4 787.5L1692.0 793.7L1692.6 779.6L1693.2 785.1L1693.8 785.7L1694.4 785.4L1695.0 785.1L1695.6 784.5L1696.2 790.5L1696.8 784.7L1697.4 785.9L1698.0 786.8L1698.6 787.7L1699.2 787.0L1699.8 792.6L1700.4 788.8L1701.0 789.7L1701.6 789.0L1702.2 785.8L1702.8 786.4L1703.4 786.0L1704.0 790.9L1704.6 788.3L1705.2 787.2L1705.8 792.3L1706.4 794.5L1707.0 786.2L1707.6 800.1L1708.2 794.0L1708.8 793.4L1709.4 799.1L1710.0 795.3L1710.6 792.7L1711.2 805.2L1711.8 792.2L1712.4 795.2L1713.0 799.9L1713.6 792.7L1714.2 796.0L1714.8 798.6L1715.4 808.7L1716.0 795.2L1716.6 797.6L1717.2 801.2L1717.8 799.1L1718.4 794.4L1719.0 800.4L1719.6 799.9L1720.2 801.8L1720.8 805.5L1721.4 805.6L1722.0 803.1L1722.6 802.7L1723.2 797.3L1723.8 800.6L1724.4 802.5L1725.0 800.6L1725.6 802.8L1726.2 800.0L1726.8 810.4L1727.4 814.8L1728.0 804.1L1728.6 807.2L1729.2 805.0L1729.8 812.1L1730.4 809.4L1731.0 808.0L1731.6 807.1L1732.2 808.8L1732.8 805.2L1733.4 812.1L1734.0 807.4L1734.6 812.6L1735.2 811.7L1735.8 816.7L1736.4 812.4L1737.0 817.5L1737.6 810.0L1738.2 816.1L1738.8 813.4L1739.4 815.5L1740.0 815.7L1740.6 820.4L1741.2 809.6L1741.8 818.0L1742.4 812.4L1743.0 823.6L1743.6 812.4L1744.2 815.7L1744.8 814.0L1745.4 828.1L1746.0 817.7L1746.6 822.8L1747.2 821.4L1747.8 817.2L1748.4 822.8L1749.0 828.1L1749.6 825.6L1750.2 831.2L1750.8 826.5L1751.4 828.1L1752.0 827.4L1752.6 830.9L1753.2 839.2L1753.8 833.5L1754.4 833.0L1755.0 830.3L1755.6 830.2L1756.2 840.3L1756.8 831.0L1757.4 831.7L1758.0 835.3L1758.6 835.1L1759.2 846.5L1759.8 830.3L1760.4 839.9L1761.0 843.1L1761.6 836.7L1762.2 838.6L1762.8 843.7L1763.4 850.5L1764.0 840.8L1764.6 838.3L1765.2 848.8L1765.8 853.2L1766.4 845.9L1767.0 839.2L1767.6 853.8L1768.2 848.8L1768.8 855.7L1769.4 852.0L1770.0 851.6L1770.6 852.3L1771.2 861.9L1771.8 863.8L1772.4 850.5L1773.0 854.8L1773.6 867.8L1774.2 860.4L1774.8 857.5L1775.4 863.2L1776.0 864.4L1776.6 865.7L1777.2 865.5L1777.8 867.2L1778.4 867.9L1779.0 872.3L1779.6 869.2L1780.2 872.0L1780.8 873.9L1781.4 881.8L1782.0 879.4L1782.6 878.2L1783.2 882.2L1783.8 883.1L1784.4 887.6L1785.0 886.5L1785.6 893.7L1786.2 893.4L1786.8 888.1L1787.4 887.4L1788.0 894.0L1788.6 894.1L1789.2 892.5L1789.8 888.5L1790.4 887.9L1791.0 897.0L1791.6 901.2L1792.2 903.2L1792.8 896.1L1793.4 906.4L1794.0 901.8L1794.6 906.7L1795.2 908.6L1795.8 905.2L1796.4 907.1L1797.0 903.1L1797.6 908.3L1798.2 906.8L1798.8 916.5L1799.4 917.2L1800.0 922.8L1800.6 922.1L1801.2 919.4L1801.8 924.4L1802.4 923.1L1803.0 928.7L1803.6 929.6L1804.2 926.3L1804.8 931.4L1805.4 933.8L1806.0 934.4L1806.6 941.5L1807.2 947.8L1807.8 940.6L1808.4 942.0L1809.0 936.7L1809.6 945.6L1810.2 947.0L1810.8 942.6L1811.4 952.9L1812.0 957.2L1812.6 954.0L1813.2 956.8L1813.8 956.5L1814.4 965.1L1815.0 958.4L1815.6 964.0L1816.2 976.3L1816.8 970.3L1817.4 973.5L1818.0 972.5L1818.6 970.3L1819.2 975.8L1819.8 979.9L1820.4 976.3L1821.0 982.9L1821.6 989.4L1822.2 991.0L1822.8 981.8L1823.4 984.9L1824.0 984.3L1824.6 996.7L1825.2 997.7L1825.8 1000.3L1826.4 995.7L1827.0 996.1L1827.6 1002.4L1828.2 1004.9L1828.8 1003.5L1829.4 1008.9L1830.0 1013.6L1830.6 1014.0L1831.2 1011.0L1831.8 1008.5L1832.4 1016.8L1833.0 1021.0L1833.6 1021.7L1834.2 1023.0L1834.8 1023.9L1835.4 1031.6L1836.0 1030.7L1836.6 1033.3L1837.2 1031.2L1837.8 1034.1L1838.4 1039.1L1839.0 1037.0L1839.6 1037.7L1840.2 1043.0L1840.8 1052.0L1841.4 1050.1L1842.0 1057.9L1842.6 1052.9L1843.2 1053.8L1843.8 1051.6L1844.4 1056.2L1845.0 1067.1L1845.6 1065.0L1846.2 1069.1L1846.8 1071.4L1847.4 1070.5L1848.0 1071.8L1848.6 1075.4L1849.2 1080.4L1849.8 1082.1L1850.4 1084.7L1851.0 1085.5L1851.6 1084.1L1852.2 1088.0L1852.8 1087.9L1853.4 1097.8L1854.0 1088.2L1854.6 1096.3L1855.2 1110.7L1855.8 1101.5L1856.4 1100.0L1857.0 1105.7L1857.6 1114.2L1858.2 1110.2L1858.8 1115.4L1859.4 1115.3L1860.0 1115.1L1860.6 1132.5L1861.2 1121.1L1861.8 1119.2L1862.4 1120.4L1863.0 1125.4L1863.6 1127.3L1864.2 1130.7L1864.8 1129.4L1865.4 1124.7L1866.0 1133.2L1866.6 1131.7L1867.2 1132.6L1867.8 1128.7L1868.4 1132.2L1869.0 1132.5L1869.6 1135.6L1870.2 1131.2L1870.8 1136.9L1871.4 1138.3L1872.0 1134.4L1872.6 1136.4L1873.2 1136.2L1873.8 1144.1L1874.4 1131.9L1875.0 1139.4L1875.6 1135.7L1876.2 1140.5L1876.8 1146.9L1877.4 1141.9L1878.0 1144.8L1878.6 1141.7L1879.2 1153.9L1879.8 1150.7L1880.4 1152.0L1881.0 1142.1L1881.6 1142.4L1882.2 1151.6L1882.8 1147.1L1883.4 1147.0L1884.0 1149.8L1884.6 1144.2L1885.2 1152.2L1885.8 1149.8L1886.4 1152.3L1887.0 1148.1L1887.6 1152.9L1888.2 1148.6L1888.8 1155.4L1889.4 1157.0L1890.0 1156.4L1890.6 1154.7L1891.2 1155.2L1891.8 1142.3L1892.4 1154.9L1893.0 1151.3L1893.6 1152.8L1894.2 1151.5L1894.8 1147.5L1895.4 1150.3L1896.0 1155.7L1896.6 1160.0L1897.2 1151.6L1897.8 1150.1L1898.4 1160.0L1899.0 1151.0L1899.6 1163.5L1900.2 1155.2L1900.8 1151.2L1901.4 1158.7L1902.0 1162.9L1902.6 1149.9L1903.2 1161.3L1903.8 1153.6L1904.4 1161.1L1905.0 1153.1L1905.6 1148.0L1906.2 1155.2L1906.8 1157.8L1907.4 1163.6L1908.0 1162.4L1908.6 1157.4L1909.2 1152.5L1909.8 1150.8L1910.4 1151.3L1911.0 1149.1L1911.6 1150.8L1912.2 1142.5L1912.8 1151.6L1913.4 1151.4L1914.0 1163.6L1914.6 1156.2L1915.2 1150.1L1915.8 1153.8L1916.4 1146.7L1917.0 1148.2L1917.6 1143.4L1918.2 1156.2L1918.8 1153.4L1919.4 1146.0L1920.0 1149.2L1920.6 1153.9L1921.2 1152.1L1921.8 1151.4L1922.4 1146.1L1923.0 1146.2L1923.6 1148.7L1924.2 1152.7L1924.8 1145.5L1925.4 1143.7L1926.0 1152.6L1926.6 1144.5L1927.2 1152.1L1927.8 1148.3L1928.4 1150.6L1929.0 1154.4L1929.6 1149.3L1930.2 1148.8L1930.8 1141.1L1931.3 1177.6" stroke="#ff0000" stroke-width="1" fill="none" shape-rendering="crispEdges"/>
<path d="M770.5 160V1208M869.5 160V1208M967.5 160V1208M1065.5 160V1208M1164.5 160V1208M1262.5 160V1208M1361.5 160V1208M1459.5 160V1208M1557.5 160V1208M1754.5 160V1208M1853.5 160V1208M1951.5 160V1208M638 187.5H1968M638 287.5H1968M638 387.5H1968M638 487.5H1968M638 587.5H1968M638 687.5H1968M638 787.5H1968M638 886.5H1968M638 986.5H1968M638 1186.5H1968" stroke="#969696" stroke-opacity="0.22" stroke-width="1" fill="none" shape-rendering="crispEdges"/>
<path d="M672.5 160V1208M1656.5 160V1208M638 1086.5H1968" stroke="#787878" stroke-opacity="0.45" stroke-width="1" fill="none" shape-rendering="crispEdges"/>
<path d="M637.5 160V1210M636.8 1209.3H1968" stroke="#000" stroke-width="1.5" fill="none"/>
<path d="M680 216.5H700" stroke="#0000ff" stroke-width="1" shape-rendering="crispEdges"/><path d="M680 246.5H700" stroke="#ff0000" stroke-width="1" shape-rendering="crispEdges"/>
<text x="709" y="225.5" font-size="18">Specification</text><text x="709" y="255.5" font-size="18">Response</text>
<text x="631" y="193.7" font-size="16.5" text-anchor="end">0.1</text>
<text x="631" y="293.6" font-size="16.5" text-anchor="end">0.01</text>
<text x="631" y="393.5" font-size="16.5" text-anchor="end">0.001</text>
<text x="631" y="493.4" font-size="16.5" text-anchor="end">0.0001</text>
<text x="631" y="593.3" font-size="16.5" text-anchor="end">10<tspan dy="-5" font-size="12" letter-spacing="1.4">−5</tspan></text>
<text x="631" y="693.2" font-size="16.5" text-anchor="end">10<tspan dy="-5" font-size="12" letter-spacing="1.4">−6</tspan></text>
<text x="631" y="793.1" font-size="16.5" text-anchor="end">10<tspan dy="-5" font-size="12" letter-spacing="1.4">−7</tspan></text>
<text x="631" y="893.0" font-size="16.5" text-anchor="end">10<tspan dy="-5" font-size="12" letter-spacing="1.4">−8</tspan></text>
<text x="631" y="992.9" font-size="16.5" text-anchor="end">10<tspan dy="-5" font-size="12" letter-spacing="1.4">−9</tspan></text>
<text x="631" y="1092.8" font-size="16.5" text-anchor="end">10<tspan dy="-5" font-size="12" letter-spacing="1.4">−10</tspan></text>
<text x="631" y="1192.7" font-size="16.5" text-anchor="end">10<tspan dy="-5" font-size="12" letter-spacing="1.4">−11</tspan></text>
<text x="671.5" y="1227" font-size="16.5" text-anchor="middle">0</text>
<text x="770.0" y="1227" font-size="16.5" text-anchor="middle">200</text>
<text x="868.4" y="1227" font-size="16.5" text-anchor="middle">400</text>
<text x="966.9" y="1227" font-size="16.5" text-anchor="middle">600</text>
<text x="1065.4" y="1227" font-size="16.5" text-anchor="middle">800</text>
<text x="1163.8" y="1227" font-size="16.5" text-anchor="middle">1000</text>
<text x="1262.3" y="1227" font-size="16.5" text-anchor="middle">1200</text>
<text x="1360.8" y="1227" font-size="16.5" text-anchor="middle">1400</text>
<text x="1459.3" y="1227" font-size="16.5" text-anchor="middle">1600</text>
<text x="1557.7" y="1227" font-size="16.5" text-anchor="middle">1800</text>
<text x="1656.2" y="1227" font-size="16.5" text-anchor="middle">2000</text>
<text x="1754.7" y="1227" font-size="16.5" text-anchor="middle">2200</text>
<text x="1853.1" y="1227" font-size="16.5" text-anchor="middle">2400</text>
</svg>
<!-- right column -->
<div class="a grp" style="left:1977px;top:169px;width:213px;height:627px"></div>
<div class="t grpt" style="left:1984px;top:160px">Data Display</div>
<div class="t" style="left:1991px;top:193px">Control Channel 1</div>
<div class="a combo" style="left:1991px;top:221px;width:185px;height:25px">1: Acceleration 1 Y-</div>
<div class="t" style="left:1991px;top:255px">Control Channel 2</div>
<div class="a combo" style="left:1991px;top:283px;width:185px;height:25px">1: Acceleration 1 Y-</div>
<div class="t" style="left:1991px;top:317px">Data Type</div>
<div class="a combo" style="left:1991px;top:345px;width:185px;height:25px">Magnitude</div>
<svg class="a" style="left:2155px;top:221px" width="14" height="150" fill="none" stroke="#333" stroke-width="1.2"><path d="M2 10L7 15L12 10M2 72L7 77L12 72M2 134L7 139L12 134"/></svg>
<div class="a btn" style="left:1992px;top:381px;width:183px;height:31px;line-height:30px">Create Window</div>
<div class="a hr" style="left:1991px;top:422px;width:185px"></div>
<div class="t" style="left:1991px;top:434px">Show all:</div>
<div class="a btn two" style="left:1992px;top:464px;width:183px;height:46px">Autospectral<br>Densities</div>
<div class="a btn two" style="left:1992px;top:522px;width:183px;height:46px">Spectral Densities<br>(phase/coh)</div>
<div class="a btn two" style="left:1992px;top:580px;width:183px;height:46px">Spectral Densities<br>(real/imag)</div>
<div class="a hr" style="left:1991px;top:636px;width:185px"></div>
<div class="t" style="left:1991px;top:648px">Window Operations:</div>
<div class="a btn two" style="left:1992px;top:678px;width:183px;height:46px">Tile All<br>Windows</div>
<div class="a btn two" style="left:1992px;top:736px;width:183px;height:46px">Close All<br>Windows</div>

<!-- bottom bar -->
<div class="a btn" style="left:4px;top:1283px;width:124px;height:31px;line-height:30px">Channel Monitor</div>
<div class="a btn dis" style="left:139px;top:1283px;width:110px;height:31px;line-height:30px">Signal Monitor</div>
<div class="a btn big red" style="left:2019px;top:1275px;width:204px;height:47px">Stop Program</div>
<svg class="a" style="left:2211px;top:1340px" width="12" height="12" fill="#a8a8a8"><rect x="8" y="0" width="3" height="3"/><rect x="4" y="4" width="3" height="3"/><rect x="8" y="4" width="3" height="3"/><rect x="0" y="8" width="3" height="3"/><rect x="4" y="8" width="3" height="3"/><rect x="8" y="8" width="3" height="3"/></svg>

</body></html>
